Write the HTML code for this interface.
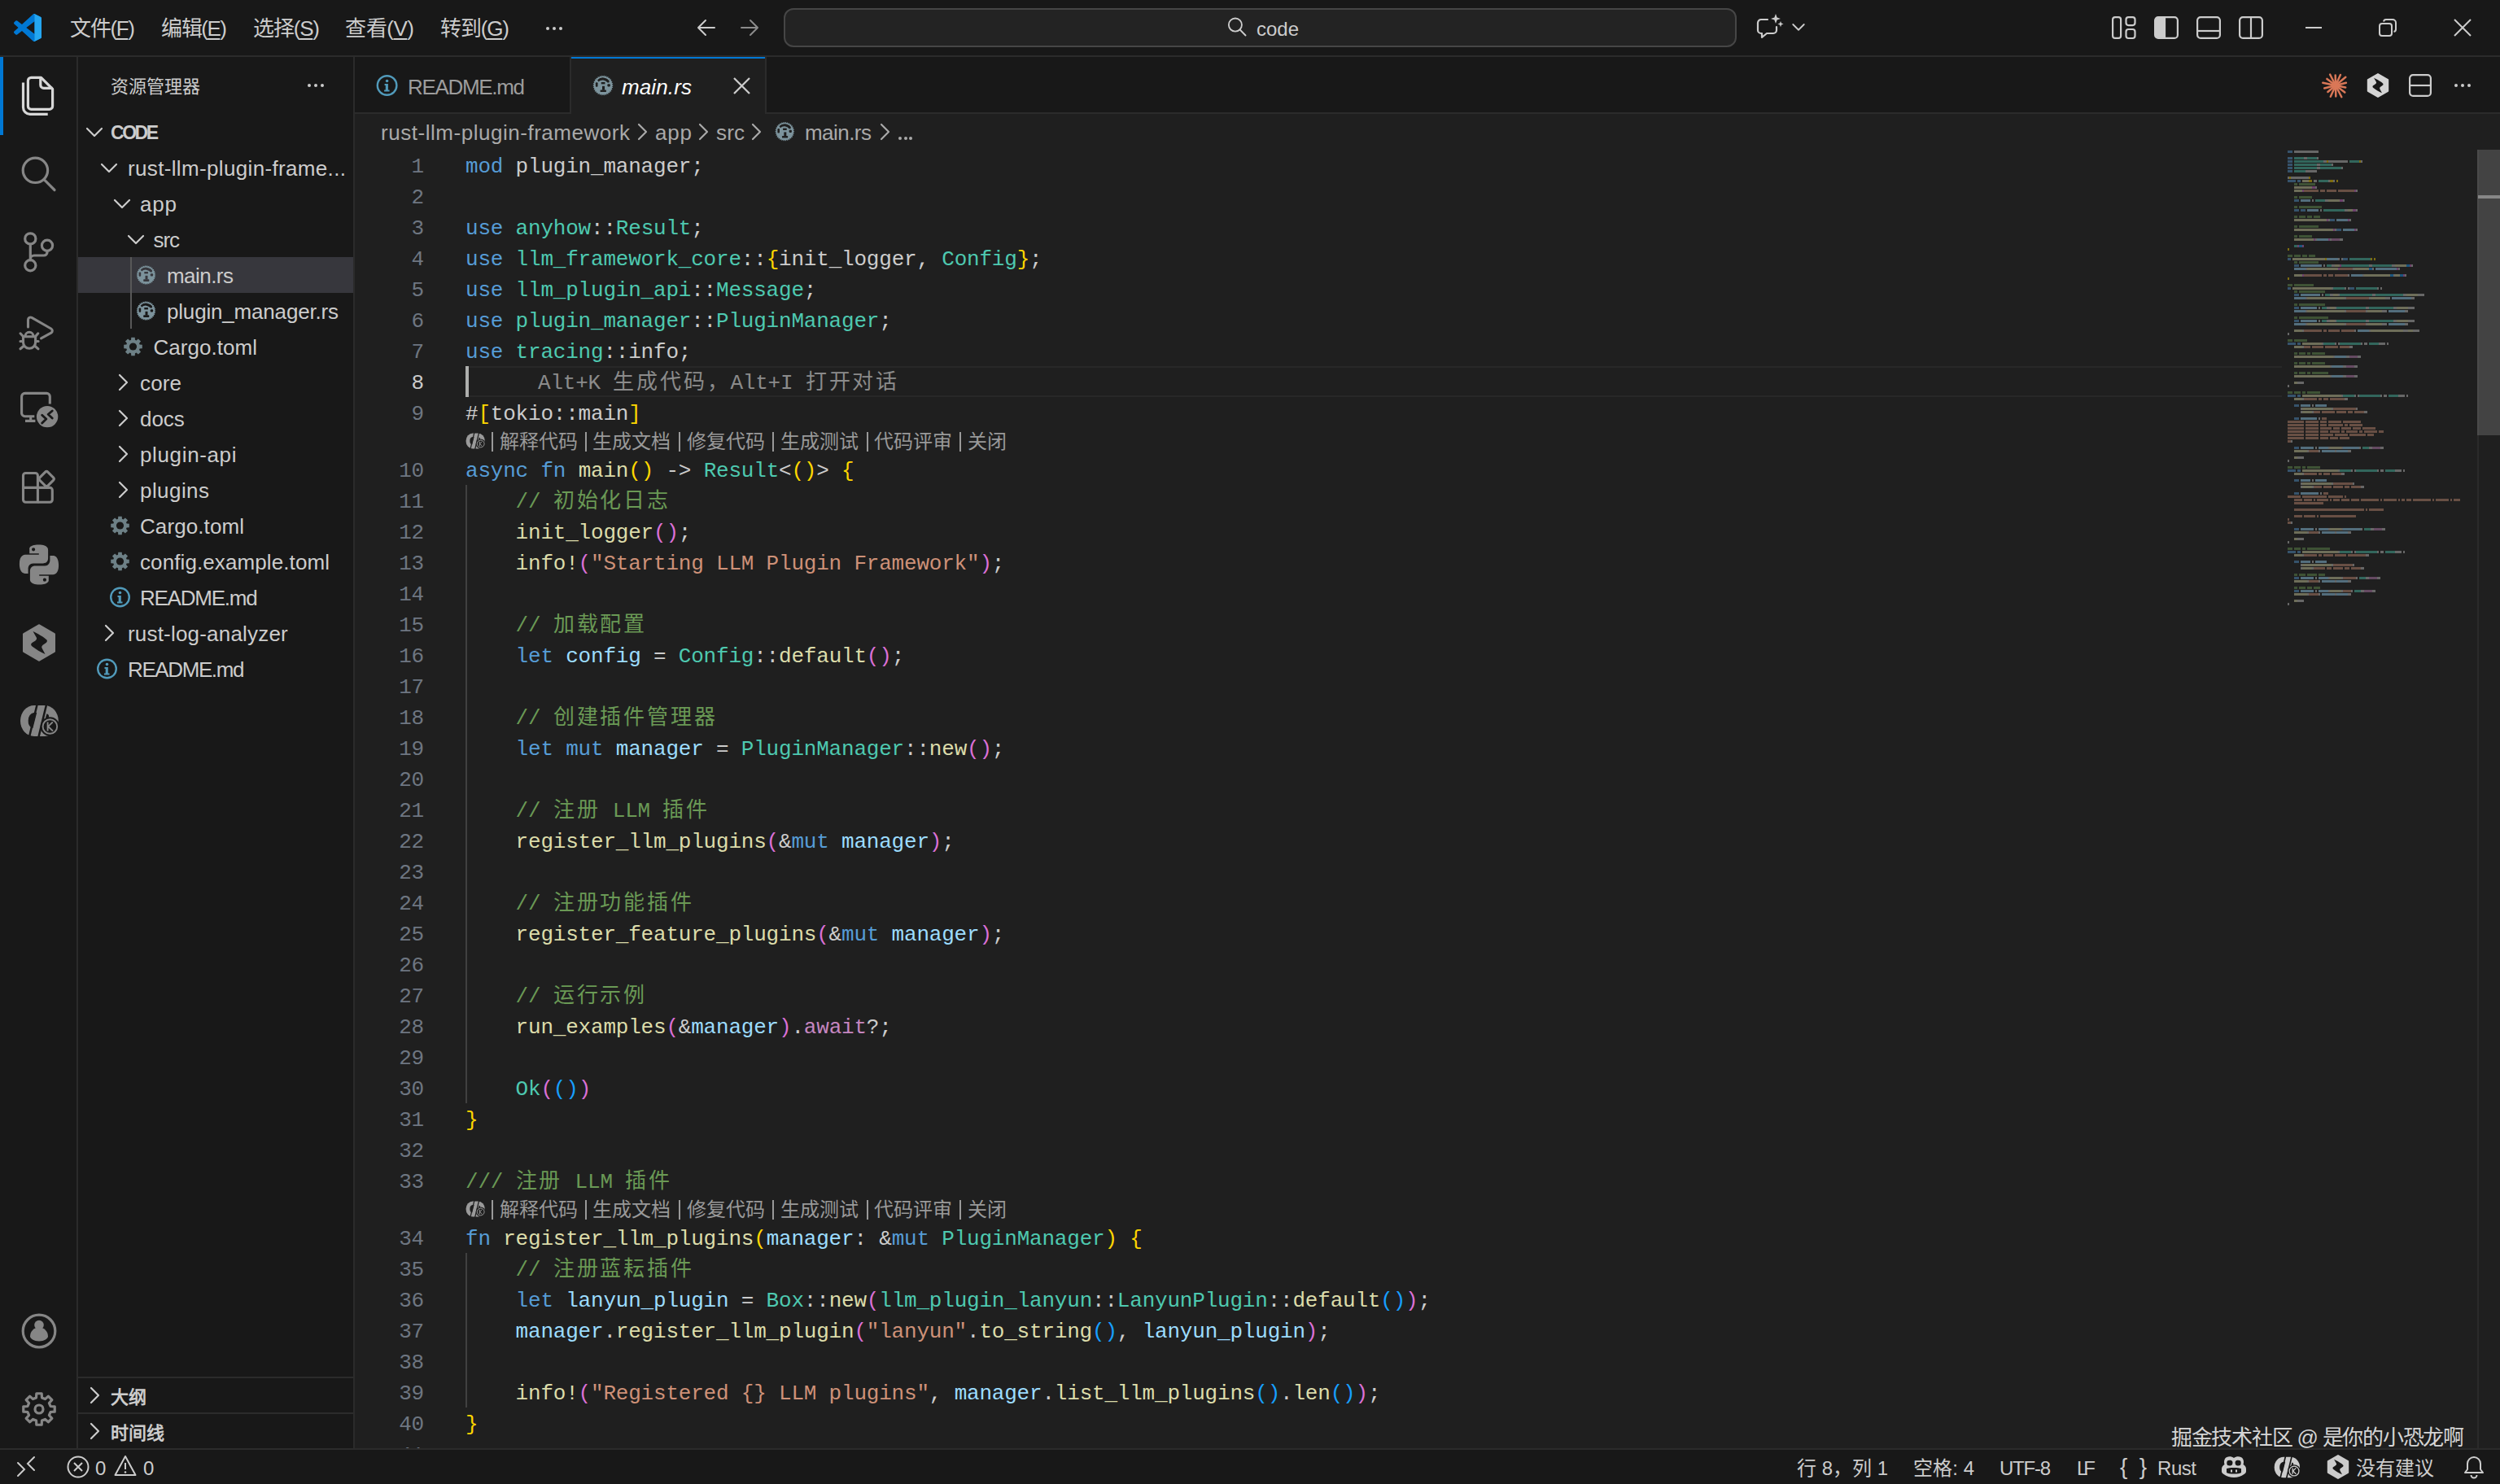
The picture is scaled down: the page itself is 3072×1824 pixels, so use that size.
<!DOCTYPE html><html lang="zh-CN"><head><meta charset="utf-8"><style>
html,body{margin:0;padding:0;width:3072px;height:1824px;overflow:hidden;background:#1f1f1f;}
.tx{position:absolute;white-space:pre;}
svg{overflow:visible}
</style></head><body>
<div style="position:absolute;left:0px;top:0px;width:3072px;height:68px;background:#181818;"></div>
<div style="position:absolute;left:0px;top:68px;width:3072px;height:2px;background:#2b2b2b;"></div>
<div style="position:absolute;left:0px;top:70px;width:94px;height:1710px;background:#181818;"></div>
<div style="position:absolute;left:94px;top:70px;width:2px;height:1710px;background:#2b2b2b;"></div>
<div style="position:absolute;left:96px;top:70px;width:338px;height:1710px;background:#181818;"></div>
<div style="position:absolute;left:434px;top:70px;width:2px;height:1710px;background:#2b2b2b;"></div>
<div style="position:absolute;left:436px;top:70px;width:2636px;height:68px;background:#181818;"></div>
<div style="position:absolute;left:436px;top:138px;width:2636px;height:2px;background:#2b2b2b;"></div>
<div style="position:absolute;left:436px;top:140px;width:2636px;height:1640px;background:#1f1f1f;"></div>
<svg style="position:absolute;left:17px;top:17px" width="34" height="34" viewBox="0 0 100 100" ><defs><linearGradient id="vsg" x1="0" y1="0" x2="1" y2="0"><stop offset="0" stop-color="#0065a9"/><stop offset="0.7" stop-color="#007acc"/><stop offset="1" stop-color="#1f9cf0"/></linearGradient></defs>
<path fill="#0078d4" d="M96.46 10.8 75.86.87a6.23 6.23 0 0 0-7.1 1.21L29.35 38.04 12.19 25.01a4.16 4.16 0 0 0-5.32.24L1.36 30.26a4.17 4.17 0 0 0 0 6.16L16.25 50 1.36 63.58a4.17 4.17 0 0 0 0 6.16l5.51 5.01a4.16 4.16 0 0 0 5.32.24l17.16-13.03 39.41 35.96a6.22 6.22 0 0 0 7.1 1.21l20.6-9.93A6.25 6.25 0 0 0 100 83.58V16.42a6.25 6.25 0 0 0-3.54-5.62zM75.01 72.7 45.1 50l29.91-22.7z"/>
<path fill="#24a6f0" d="M75.86.87 96.46 10.8A6.25 6.25 0 0 1 100 16.42v67.16a6.25 6.25 0 0 1-3.54 5.62l-20.6 9.93a6.22 6.22 0 0 1-7.1-1.21A3.65 3.65 0 0 0 75 95.35V4.65A3.65 3.65 0 0 0 68.76 2.08 6.23 6.23 0 0 1 75.86.87z"/></svg>
<div id="t1" class="tx" style="left:86px;top:21.99px;font-size:26px;line-height:26px;color:#cccccc;font-weight:normal;font-style:normal;font-family:'Liberation Sans', sans-serif;letter-spacing:-1.309px;">文件(<span style="text-decoration:underline;text-decoration-thickness:2px;text-underline-offset:3px">F</span>)</div>
<div id="t2" class="tx" style="left:198px;top:21.99px;font-size:26px;line-height:26px;color:#cccccc;font-weight:normal;font-style:normal;font-family:'Liberation Sans', sans-serif;letter-spacing:-1.422px;">编辑(<span style="text-decoration:underline;text-decoration-thickness:2px;text-underline-offset:3px">E</span>)</div>
<div id="t3" class="tx" style="left:311px;top:21.99px;font-size:26px;line-height:26px;color:#cccccc;font-weight:normal;font-style:normal;font-family:'Liberation Sans', sans-serif;letter-spacing:-1.172px;">选择(<span style="text-decoration:underline;text-decoration-thickness:2px;text-underline-offset:3px">S</span>)</div>
<div id="t4" class="tx" style="left:424px;top:21.99px;font-size:26px;line-height:26px;color:#cccccc;font-weight:normal;font-style:normal;font-family:'Liberation Sans', sans-serif;letter-spacing:-0.422px;">查看(<span style="text-decoration:underline;text-decoration-thickness:2px;text-underline-offset:3px">V</span>)</div>
<div id="t5" class="tx" style="left:541px;top:21.99px;font-size:26px;line-height:26px;color:#cccccc;font-weight:normal;font-style:normal;font-family:'Liberation Sans', sans-serif;letter-spacing:-1.145px;">转到(<span style="text-decoration:underline;text-decoration-thickness:2px;text-underline-offset:3px">G</span>)</div>
<div style="position:absolute;left:671px;top:33px;width:4px;height:4px;background:#cccccc;border-radius:2px"></div>
<div style="position:absolute;left:679px;top:33px;width:4px;height:4px;background:#cccccc;border-radius:2px"></div>
<div style="position:absolute;left:687px;top:33px;width:4px;height:4px;background:#cccccc;border-radius:2px"></div>
<svg style="position:absolute;left:852px;top:18px" width="32" height="32" viewBox="0 0 16 16" ><g fill="none" stroke="#cccccc" stroke-width="1.0" stroke-linecap="round" stroke-linejoin="round"><path d="M13 8H3M7.5 3.5 3 8l4.5 4.5"/></g></svg>
<svg style="position:absolute;left:905px;top:18px" width="32" height="32" viewBox="0 0 16 16" ><g fill="none" stroke="#8b8b8b" stroke-width="1.0" stroke-linecap="round" stroke-linejoin="round"><path d="M3 8h10M8.5 3.5 13 8l-4.5 4.5"/></g></svg>
<div style="position:absolute;left:963px;top:10px;width:1167px;height:44px;border:2px solid #464646;border-radius:12px;background:#232323"></div>
<svg style="position:absolute;left:1506px;top:19px" width="28" height="28" viewBox="0 0 16 16" ><g fill="none" stroke="#cccccc" stroke-width="1.05" stroke-linecap="round" stroke-linejoin="round"><circle cx="6.8" cy="6.6" r="4.6"/><path d="M10.1 10 14 14"/></g></svg>
<div id="t6" class="tx" style="left:1544px;top:23.68px;font-size:24px;line-height:24px;color:#cccccc;font-weight:normal;font-style:normal;font-family:'Liberation Sans', sans-serif;letter-spacing:-0.016px;">code</div>
<svg style="position:absolute;left:2158px;top:16px" width="38" height="36" viewBox="0 0 38 36" ><g fill="none" stroke="#cccccc" stroke-width="2.2" stroke-linejoin="round" stroke-linecap="round">
<path d="M14 8H6a4 4 0 0 0-4 4v9a4 4 0 0 0 4 4h1v5l6-5h8a4 4 0 0 0 4-4v-4"/></g>
<path fill="#cccccc" d="M24 1l1.6 4.4L30 7l-4.4 1.6L24 13l-1.6-4.4L18 7l4.4-1.6z"/>
<path fill="#cccccc" d="M30 10l1 2.6 2.6 1-2.6 1-1 2.6-1-2.6-2.6-1 2.6-1z"/></svg>
<svg style="position:absolute;left:2198px;top:21px" width="24" height="24" viewBox="0 0 16 16" ><g fill="none" stroke="#cccccc" stroke-width="1.2" stroke-linecap="round" stroke-linejoin="round"><path d="M3.5 6 8 10.5 12.5 6"/></g></svg>
<svg style="position:absolute;left:2595px;top:20px" width="30" height="28" viewBox="0 0 30 28" ><g fill="none" stroke="#cccccc" stroke-width="2.2"><rect x="1.1" y="1.1" width="10" height="25.8" rx="3"/><rect x="17.5" y="1.1" width="11" height="10" rx="3"/><rect x="17.5" y="16" width="11" height="11" rx="3"/></g></svg>
<svg style="position:absolute;left:2647px;top:20px" width="30" height="28" viewBox="0 0 30 28" ><rect x="1.1" y="1.1" width="27.8" height="25.8" rx="4" fill="none" stroke="#cccccc" stroke-width="2.2"/><path d="M5 1.1h8v25.8H5a3.9 3.9 0 0 1-3.9-3.9V5A3.9 3.9 0 0 1 5 1.1z" fill="#cccccc"/><path d="M13 1v26" stroke="#cccccc" stroke-width="2.2"/></svg>
<svg style="position:absolute;left:2699px;top:20px" width="30" height="28" viewBox="0 0 30 28" ><g fill="none" stroke="#cccccc" stroke-width="2.2"><rect x="1.1" y="1.1" width="27.8" height="25.8" rx="4"/><path d="M1 18h28"/></g></svg>
<svg style="position:absolute;left:2751px;top:20px" width="30" height="28" viewBox="0 0 30 28" ><g fill="none" stroke="#cccccc" stroke-width="2.2"><rect x="1.1" y="1.1" width="27.8" height="25.8" rx="4"/><path d="M15 1v26"/></g></svg>
<div style="position:absolute;left:2833px;top:33px;width:20px;height:2px;background:#cccccc;"></div>
<svg style="position:absolute;left:2923px;top:23px" width="22" height="22" viewBox="0 0 22 22" ><g fill="none" stroke="#cccccc" stroke-width="2"><rect x="1" y="6" width="15" height="15" rx="3"/><path d="M6 3.5A3 3 0 0 1 9 1h8a4 4 0 0 1 4 4v8a3 3 0 0 1-2.5 3"/></g></svg>
<svg style="position:absolute;left:3015px;top:23px" width="22" height="22" viewBox="0 0 22 22" ><g stroke="#cccccc" stroke-width="2"><path d="M1 1l20 20M21 1L1 21"/></g></svg>
<div style="position:absolute;left:0px;top:70px;width:4px;height:96px;background:#0078d4;"></div>
<svg style="position:absolute;left:0px;top:70px" width="96" height="96" viewBox="0 0 96 96" ><g fill="none" stroke="#d7d7d7" stroke-width="3.2" stroke-linejoin="round">
<path d="M38.4 25.3H50.5L64.6 39.4V60.4a4 4 0 0 1-4 4H38.4a4 4 0 0 1-4-4V29.3a4 4 0 0 1 4-4z"/>
<path d="M49.8 25.5V34.4a4 4 0 0 0 4 4H64.5"/>
<path d="M28.5 31.5V62a8.3 8.3 0 0 0 8.3 8.3H58.7"/></g></svg>
<svg style="position:absolute;left:0px;top:166px" width="96" height="96" viewBox="0 0 96 96" ><g fill="none" stroke="#868686" stroke-width="3.2" stroke-linecap="round"><circle cx="43.4" cy="43.3" r="15.2"/><path d="M54.6 55.2 67 67.5"/></g></svg>
<svg style="position:absolute;left:0px;top:262px" width="96" height="96" viewBox="0 0 96 96" ><g fill="none" stroke="#868686" stroke-width="3.2" stroke-linecap="round"><circle cx="37.3" cy="31.4" r="6.6"/><circle cx="37.3" cy="64.3" r="6.6"/><circle cx="58" cy="39.8" r="6.6"/><path d="M37.3 38v19.7M58 46.4v1.6a4 4 0 0 1-4 4H42a4.7 4.7 0 0 0-4.7 4.7"/></g></svg>
<svg style="position:absolute;left:0px;top:358px" width="96" height="96" viewBox="0 0 96 96" ><g fill="none" stroke="#868686" stroke-width="3.1" stroke-linecap="round" stroke-linejoin="round">
<path d="M34.5 44V35a3 3 0 0 1 4.5-2.6l23.8 13.6a3 3 0 0 1 0 5.2L50.5 57.8"/>
<path d="M28.5 55.7h15.1v7a7.55 7.55 0 0 1-15.1 0z"/><path d="M31 55.3a5 5 0 0 1 10 0"/>
<path d="M25 51.8l3.5 3.7M46.8 51.8l-3.2 3.7M25 61.5h3.5M43.6 61.5h3.5M25 70.8l4.5-3.8M47 70.8l-4.4-3.8"/></g></svg>
<svg style="position:absolute;left:0px;top:454px" width="96" height="96" viewBox="0 0 96 96" ><g fill="none" stroke="#868686" stroke-width="3.1" stroke-linecap="butt" stroke-linejoin="round">
<path d="M42.3 57.7H30.6a4 4 0 0 1-4-4V33.4a4 4 0 0 1 4-4h26.7a4 4 0 0 1 4 4v9.2"/><path d="M37.7 58v5M31 63.4h12.4"/></g>
<circle cx="58.1" cy="58.1" r="13.2" fill="#868686"/>
<g fill="none" stroke="#181818" stroke-width="2.8" stroke-linecap="round" stroke-linejoin="round"><path d="M51.7 56.2 56.8 61.1 51.7 66M64.2 51 59.2 55.3 64.2 60"/></g></svg>
<svg style="position:absolute;left:0px;top:550px" width="96" height="96" viewBox="0 0 96 96" ><g fill="none" stroke="#868686" stroke-width="3.1" stroke-linejoin="round">
<path d="M31.5 31.5h11.9a3 3 0 0 1 3 3v32.8H31.5a3 3 0 0 1-3-3V34.5a3 3 0 0 1 3-3z"/><path d="M28.5 49.4h32.8a3 3 0 0 1 3 3v11.9a3 3 0 0 1-3 3H46.4"/>
<rect x="50.1" y="31.5" width="14.2" height="14.2" rx="2.5" transform="rotate(45 57.2 38.6)"/></g></svg>
<svg style="position:absolute;left:0px;top:646px" width="96" height="96" viewBox="0 0 96 96" ><path fill="#868686" d="M47.5 23.5c-12 0-11.3 5.2-11.3 5.2v5.5h11.6v1.6H31.6s-7.7-.9-7.7 11.3 6.7 11.8 6.7 11.8h4v-5.7s-.2-6.7 6.6-6.7h11.5s6.4.1 6.4-6.2V30s1-6.5-11.6-6.5zm-6.4 3.7a2.1 2.1 0 1 1 0 4.2 2.1 2.1 0 0 1 0-4.2z"/>
<path fill="#868686" d="M48.5 72.5c12 0 11.3-5.2 11.3-5.2v-5.5H48.2v-1.6h16.2s7.7.9 7.7-11.3-6.7-11.8-6.7-11.8h-4v5.7s.2 6.7-6.6 6.7H43.3s-6.4-.1-6.4 6.2V66s-1 6.5 11.6 6.5zm6.4-3.7a2.1 2.1 0 1 1 0-4.2 2.1 2.1 0 0 1 0 4.2z"/></svg>
<svg style="position:absolute;left:0px;top:0px" width="1" height="1" viewBox="0 0 1 1" ><g transform="translate(48,790) scale(1.0) translate(-48,-48)"><path fill="#868686" stroke="#868686" stroke-width="3" stroke-linejoin="round" d="M48 26.8 66.5 37.6v20.8L48 69.2 29.5 58.4V37.6z"/>
<path fill="#181818" d="M40.5 34C46 36.5 54 41 57.5 44.5 58.5 46 57.5 47.5 56 48.5 53 50.5 50.5 52 51.5 54.5L55.5 62C50 59.5 44 56 39.5 52.5 37.5 51 37.8 49 39.5 48 43 46 45.5 44.5 45 42z"/></g></svg>
<svg style="position:absolute;left:24.0px;top:866.0px" width="48.0" height="40.0" viewBox="0 0 48 40" ><rect x="1" y="1" width="46.8" height="38" rx="17" ry="19" fill="#868686"/>
<path fill="#181818" d="M20.5 -1h2.6L13 41h-2.6zM32 -1h2.6L24.5 41h-2.6z"/>
<path fill="#181818" d="M21.2 10L17.5 10A7.5 9.5 0 0 0 10.7 19.5 7.5 9.5 0 0 0 15.5 29L16.4 29z"/>
<path fill="#181818" d="M33.5 11.2a3.8 3.8 0 0 1 2.3 4.8l-2 0.3-1.8-0.3z"/>
<circle cx="37.4" cy="27" r="11.8" fill="#181818"/>
<circle cx="37.4" cy="27" r="8.8" fill="none" stroke="#868686" stroke-width="1.9"/>
<path fill="none" stroke="#868686" stroke-width="1.9" d="M34.6 21.5v11M40.8 21.5l-5.6 5.4 5.8 5.6"/></svg>
<svg style="position:absolute;left:0px;top:1588px" width="96" height="96" viewBox="0 0 96 96" ><circle cx="48" cy="48" r="19.8" fill="none" stroke="#868686" stroke-width="3.2"/>
<circle cx="48" cy="40.5" r="5.8" fill="#868686"/><path fill="#868686" d="M37 54.5a11 11 0 0 1 22 0c0 2.5-4.5 6-11 6s-11-3.5-11-6z"/></svg>
<svg style="position:absolute;left:0px;top:1684px" width="96" height="96" viewBox="0 0 96 96" ><path fill="none" stroke="#868686" stroke-width="3.2" stroke-linejoin="round" d="M67.24 44.80 L67.24 51.20 L62.07 51.50 L60.42 55.48 L63.87 59.34 L59.34 63.87 L55.48 60.42 L51.50 62.07 L51.20 67.24 L44.80 67.24 L44.50 62.07 L40.52 60.42 L36.66 63.87 L32.13 59.34 L35.58 55.48 L33.93 51.50 L28.76 51.20 L28.76 44.80 L33.93 44.50 L35.58 40.52 L32.13 36.66 L36.66 32.13 L40.52 35.58 L44.50 33.93 L44.80 28.76 L51.20 28.76 L51.50 33.93 L55.48 35.58 L59.34 32.13 L63.87 36.66 L60.42 40.52 L62.07 44.50z"/><circle cx="48" cy="48" r="5" fill="none" stroke="#868686" stroke-width="3.2"/></svg>
<div id="t7" class="tx" style="left:136px;top:96.38px;font-size:22px;line-height:22px;color:#cccccc;font-weight:normal;font-style:normal;font-family:'Liberation Sans', sans-serif;">资源管理器</div>
<div style="position:absolute;left:378px;top:103px;width:4px;height:4px;background:#cccccc;border-radius:2px"></div>
<div style="position:absolute;left:386px;top:103px;width:4px;height:4px;background:#cccccc;border-radius:2px"></div>
<div style="position:absolute;left:394px;top:103px;width:4px;height:4px;background:#cccccc;border-radius:2px"></div>
<div style="position:absolute;left:96px;top:316px;width:338px;height:44px;background:#37373d;"></div>
<div style="position:absolute;left:160px;top:316px;width:2px;height:88px;background:#585858;"></div>
<svg style="position:absolute;left:100px;top:146px" width="32" height="32" viewBox="0 0 16 16" ><g fill="none" stroke="#cccccc" stroke-width="1.1" stroke-linecap="round" stroke-linejoin="round"><path d="M3.5 6 L8 10.5 L12.5 6"/></g></svg>
<div id="t8" class="tx" style="left:136px;top:152.03px;font-size:23px;line-height:23px;color:#cccccc;font-weight:bold;font-style:normal;font-family:'Liberation Sans', sans-serif;letter-spacing:-2.484px;">CODE</div>
<svg style="position:absolute;left:118px;top:190px" width="32" height="32" viewBox="0 0 16 16" ><g fill="none" stroke="#cccccc" stroke-width="1.1" stroke-linecap="round" stroke-linejoin="round"><path d="M3.5 6 L8 10.5 L12.5 6"/></g></svg>
<div id="t9" class="tx" style="left:157px;top:193.59px;font-size:26px;line-height:26px;color:#cccccc;font-weight:normal;font-style:normal;font-family:'Liberation Sans', sans-serif;letter-spacing:0.345px;">rust-llm-plugin-frame...</div>
<svg style="position:absolute;left:134px;top:234px" width="32" height="32" viewBox="0 0 16 16" ><g fill="none" stroke="#cccccc" stroke-width="1.1" stroke-linecap="round" stroke-linejoin="round"><path d="M3.5 6 L8 10.5 L12.5 6"/></g></svg>
<div id="t10" class="tx" style="left:172px;top:237.59px;font-size:26px;line-height:26px;color:#cccccc;font-weight:normal;font-style:normal;font-family:'Liberation Sans', sans-serif;letter-spacing:0.805px;">app</div>
<svg style="position:absolute;left:150.5px;top:278px" width="32" height="32" viewBox="0 0 16 16" ><g fill="none" stroke="#cccccc" stroke-width="1.1" stroke-linecap="round" stroke-linejoin="round"><path d="M3.5 6 L8 10.5 L12.5 6"/></g></svg>
<div id="t11" class="tx" style="left:188.5px;top:281.59px;font-size:26px;line-height:26px;color:#cccccc;font-weight:normal;font-style:normal;font-family:'Liberation Sans', sans-serif;letter-spacing:-1.086px;">src</div>
<svg style="position:absolute;left:0px;top:0px" width="1" height="1" viewBox="0 0 1 1" ><g transform="translate(179.5,338) scale(1.000)"><path fill="#7c939c" d="M12.00 0.00 L10.44 1.10 L11.74 2.49 L9.99 3.24 L10.96 4.88 L9.09 5.25 L9.71 7.05 L7.80 7.03 L8.03 8.92 L6.17 8.49 L6.00 10.39 L4.27 9.59 L3.71 11.41 L2.18 10.27 L1.25 11.93 L0.00 10.50 L-1.25 11.93 L-2.18 10.27 L-3.71 11.41 L-4.27 9.59 L-6.00 10.39 L-6.17 8.49 L-8.03 8.92 L-7.80 7.03 L-9.71 7.05 L-9.09 5.25 L-10.96 4.88 L-9.99 3.24 L-11.74 2.49 L-10.44 1.10 L-12.00 0.00 L-10.44 -1.10 L-11.74 -2.49 L-9.99 -3.24 L-10.96 -4.88 L-9.09 -5.25 L-9.71 -7.05 L-7.80 -7.03 L-8.03 -8.92 L-6.17 -8.49 L-6.00 -10.39 L-4.27 -9.59 L-3.71 -11.41 L-2.18 -10.27 L-1.25 -11.93 L-0.00 -10.50 L1.25 -11.93 L2.18 -10.27 L3.71 -11.41 L4.27 -9.59 L6.00 -10.39 L6.17 -8.49 L8.03 -8.92 L7.80 -7.03 L9.71 -7.05 L9.09 -5.25 L10.96 -4.88 L9.99 -3.24 L11.74 -2.49 L10.44 -1.10z"/>
<g fill="#37373d"><path d="M-6.8 -6.6 A9.4 9.4 0 0 1 7.6 -5.4 L7.2 -3.4 L5.4 -3.4 A7.2 7.2 0 0 0 -5.4 -4.4 z"/>
<rect x="-2.2" y="-4" width="4.6" height="2.4"/><path d="M-1 0.8 h3 v4.8 h-3z"/><rect x="-3.3" y="5.3" width="7.1" height="2.6" rx="0.6"/>
<rect x="-8.9" y="-3.6" width="2.6" height="5.4" rx="1"/><rect x="5.3" y="-1.8" width="3.3" height="3.2" rx="1"/></g></g></svg>
<div id="t12" class="tx" style="left:205px;top:325.59px;font-size:26px;line-height:26px;color:#cccccc;font-weight:normal;font-style:normal;font-family:'Liberation Sans', sans-serif;letter-spacing:-0.542px;">main.rs</div>
<svg style="position:absolute;left:0px;top:0px" width="1" height="1" viewBox="0 0 1 1" ><g transform="translate(179.5,382) scale(1.000)"><path fill="#7c939c" d="M12.00 0.00 L10.44 1.10 L11.74 2.49 L9.99 3.24 L10.96 4.88 L9.09 5.25 L9.71 7.05 L7.80 7.03 L8.03 8.92 L6.17 8.49 L6.00 10.39 L4.27 9.59 L3.71 11.41 L2.18 10.27 L1.25 11.93 L0.00 10.50 L-1.25 11.93 L-2.18 10.27 L-3.71 11.41 L-4.27 9.59 L-6.00 10.39 L-6.17 8.49 L-8.03 8.92 L-7.80 7.03 L-9.71 7.05 L-9.09 5.25 L-10.96 4.88 L-9.99 3.24 L-11.74 2.49 L-10.44 1.10 L-12.00 0.00 L-10.44 -1.10 L-11.74 -2.49 L-9.99 -3.24 L-10.96 -4.88 L-9.09 -5.25 L-9.71 -7.05 L-7.80 -7.03 L-8.03 -8.92 L-6.17 -8.49 L-6.00 -10.39 L-4.27 -9.59 L-3.71 -11.41 L-2.18 -10.27 L-1.25 -11.93 L-0.00 -10.50 L1.25 -11.93 L2.18 -10.27 L3.71 -11.41 L4.27 -9.59 L6.00 -10.39 L6.17 -8.49 L8.03 -8.92 L7.80 -7.03 L9.71 -7.05 L9.09 -5.25 L10.96 -4.88 L9.99 -3.24 L11.74 -2.49 L10.44 -1.10z"/>
<g fill="#181818"><path d="M-6.8 -6.6 A9.4 9.4 0 0 1 7.6 -5.4 L7.2 -3.4 L5.4 -3.4 A7.2 7.2 0 0 0 -5.4 -4.4 z"/>
<rect x="-2.2" y="-4" width="4.6" height="2.4"/><path d="M-1 0.8 h3 v4.8 h-3z"/><rect x="-3.3" y="5.3" width="7.1" height="2.6" rx="0.6"/>
<rect x="-8.9" y="-3.6" width="2.6" height="5.4" rx="1"/><rect x="5.3" y="-1.8" width="3.3" height="3.2" rx="1"/></g></g></svg>
<div id="t13" class="tx" style="left:205px;top:369.59px;font-size:26px;line-height:26px;color:#cccccc;font-weight:normal;font-style:normal;font-family:'Liberation Sans', sans-serif;letter-spacing:-0.183px;">plugin_manager.rs</div>
<svg style="position:absolute;left:0px;top:0px" width="1" height="1" viewBox="0 0 1 1" ><path fill="#6d8086" d="M174.78 423.76 L174.78 428.24 L171.64 428.47 L171.01 430.01 L173.06 432.39 L169.89 435.56 L167.51 433.51 L165.97 434.14 L165.74 437.28 L161.26 437.28 L161.03 434.14 L159.49 433.51 L157.11 435.56 L153.94 432.39 L155.99 430.01 L155.36 428.47 L152.22 428.24 L152.22 423.76 L155.36 423.53 L155.99 421.99 L153.94 419.61 L157.11 416.44 L159.49 418.49 L161.03 417.86 L161.26 414.72 L165.74 414.72 L165.97 417.86 L167.51 418.49 L169.89 416.44 L173.06 419.61 L171.01 421.99 L171.64 423.53z"/><circle cx="163.5" cy="426" r="4.60" fill="#181818"/></svg>
<div id="t14" class="tx" style="left:188.5px;top:413.59px;font-size:26px;line-height:26px;color:#cccccc;font-weight:normal;font-style:normal;font-family:'Liberation Sans', sans-serif;letter-spacing:0.038px;">Cargo.toml</div>
<svg style="position:absolute;left:134.5px;top:454px" width="32" height="32" viewBox="0 0 16 16" ><g fill="none" stroke="#cccccc" stroke-width="1.1" stroke-linecap="round" stroke-linejoin="round"><path d="M6 3.5 L10.5 8 L6 12.5"/></g></svg>
<div id="t15" class="tx" style="left:172px;top:457.59px;font-size:26px;line-height:26px;color:#cccccc;font-weight:normal;font-style:normal;font-family:'Liberation Sans', sans-serif;letter-spacing:0.141px;">core</div>
<svg style="position:absolute;left:134.5px;top:498px" width="32" height="32" viewBox="0 0 16 16" ><g fill="none" stroke="#cccccc" stroke-width="1.1" stroke-linecap="round" stroke-linejoin="round"><path d="M6 3.5 L10.5 8 L6 12.5"/></g></svg>
<div id="t16" class="tx" style="left:172px;top:501.59px;font-size:26px;line-height:26px;color:#cccccc;font-weight:normal;font-style:normal;font-family:'Liberation Sans', sans-serif;letter-spacing:-0.041px;">docs</div>
<svg style="position:absolute;left:134.5px;top:542px" width="32" height="32" viewBox="0 0 16 16" ><g fill="none" stroke="#cccccc" stroke-width="1.1" stroke-linecap="round" stroke-linejoin="round"><path d="M6 3.5 L10.5 8 L6 12.5"/></g></svg>
<div id="t17" class="tx" style="left:172px;top:545.59px;font-size:26px;line-height:26px;color:#cccccc;font-weight:normal;font-style:normal;font-family:'Liberation Sans', sans-serif;letter-spacing:0.639px;">plugin-api</div>
<svg style="position:absolute;left:134.5px;top:586px" width="32" height="32" viewBox="0 0 16 16" ><g fill="none" stroke="#cccccc" stroke-width="1.1" stroke-linecap="round" stroke-linejoin="round"><path d="M6 3.5 L10.5 8 L6 12.5"/></g></svg>
<div id="t18" class="tx" style="left:172px;top:589.59px;font-size:26px;line-height:26px;color:#cccccc;font-weight:normal;font-style:normal;font-family:'Liberation Sans', sans-serif;letter-spacing:0.432px;">plugins</div>
<svg style="position:absolute;left:0px;top:0px" width="1" height="1" viewBox="0 0 1 1" ><path fill="#6d8086" d="M158.78 643.76 L158.78 648.24 L155.64 648.47 L155.01 650.01 L157.06 652.39 L153.89 655.56 L151.51 653.51 L149.97 654.14 L149.74 657.28 L145.26 657.28 L145.03 654.14 L143.49 653.51 L141.11 655.56 L137.94 652.39 L139.99 650.01 L139.36 648.47 L136.22 648.24 L136.22 643.76 L139.36 643.53 L139.99 641.99 L137.94 639.61 L141.11 636.44 L143.49 638.49 L145.03 637.86 L145.26 634.72 L149.74 634.72 L149.97 637.86 L151.51 638.49 L153.89 636.44 L157.06 639.61 L155.01 641.99 L155.64 643.53z"/><circle cx="147.5" cy="646" r="4.60" fill="#181818"/></svg>
<div id="t19" class="tx" style="left:172px;top:633.59px;font-size:26px;line-height:26px;color:#cccccc;font-weight:normal;font-style:normal;font-family:'Liberation Sans', sans-serif;letter-spacing:0.094px;">Cargo.toml</div>
<svg style="position:absolute;left:0px;top:0px" width="1" height="1" viewBox="0 0 1 1" ><path fill="#6d8086" d="M158.78 687.76 L158.78 692.24 L155.64 692.47 L155.01 694.01 L157.06 696.39 L153.89 699.56 L151.51 697.51 L149.97 698.14 L149.74 701.28 L145.26 701.28 L145.03 698.14 L143.49 697.51 L141.11 699.56 L137.94 696.39 L139.99 694.01 L139.36 692.47 L136.22 692.24 L136.22 687.76 L139.36 687.53 L139.99 685.99 L137.94 683.61 L141.11 680.44 L143.49 682.49 L145.03 681.86 L145.26 678.72 L149.74 678.72 L149.97 681.86 L151.51 682.49 L153.89 680.44 L157.06 683.61 L155.01 685.99 L155.64 687.53z"/><circle cx="147.5" cy="690" r="4.60" fill="#181818"/></svg>
<div id="t20" class="tx" style="left:172px;top:677.59px;font-size:26px;line-height:26px;color:#cccccc;font-weight:normal;font-style:normal;font-family:'Liberation Sans', sans-serif;letter-spacing:0.098px;">config.example.toml</div>
<svg style="position:absolute;left:0px;top:0px" width="1" height="1" viewBox="0 0 1 1" ><circle cx="147.5" cy="734" r="11.3" fill="none" stroke="#519aba" stroke-width="2.4"/>
<circle cx="147.5" cy="728.5" r="1.8" fill="#519aba"/><path fill="#519aba" d="M144.5 732h4.3v7.5h1.7v2h-6.5v-2h1.7v-5.5h-1.2z"/></svg>
<div id="t21" class="tx" style="left:172px;top:721.59px;font-size:26px;line-height:26px;color:#cccccc;font-weight:normal;font-style:normal;font-family:'Liberation Sans', sans-serif;letter-spacing:-1.247px;">README.md</div>
<svg style="position:absolute;left:118px;top:762px" width="32" height="32" viewBox="0 0 16 16" ><g fill="none" stroke="#cccccc" stroke-width="1.1" stroke-linecap="round" stroke-linejoin="round"><path d="M6 3.5 L10.5 8 L6 12.5"/></g></svg>
<div id="t22" class="tx" style="left:157px;top:765.59px;font-size:26px;line-height:26px;color:#cccccc;font-weight:normal;font-style:normal;font-family:'Liberation Sans', sans-serif;letter-spacing:0.191px;">rust-log-analyzer</div>
<svg style="position:absolute;left:0px;top:0px" width="1" height="1" viewBox="0 0 1 1" ><circle cx="131.5" cy="822" r="11.3" fill="none" stroke="#519aba" stroke-width="2.4"/>
<circle cx="131.5" cy="816.5" r="1.8" fill="#519aba"/><path fill="#519aba" d="M128.5 820h4.3v7.5h1.7v2h-6.5v-2h1.7v-5.5h-1.2z"/></svg>
<div id="t23" class="tx" style="left:157px;top:809.59px;font-size:26px;line-height:26px;color:#cccccc;font-weight:normal;font-style:normal;font-family:'Liberation Sans', sans-serif;letter-spacing:-1.397px;">README.md</div>
<div style="position:absolute;left:96px;top:1692px;width:338px;height:2px;background:#2b2b2b;"></div>
<div style="position:absolute;left:96px;top:1736px;width:338px;height:2px;background:#2b2b2b;"></div>
<svg style="position:absolute;left:100px;top:1699px" width="32" height="32" viewBox="0 0 16 16" ><g fill="none" stroke="#cccccc" stroke-width="1.1" stroke-linecap="round" stroke-linejoin="round"><path d="M6 3.5 L10.5 8 L6 12.5"/></g></svg>
<div id="t24" class="tx" style="left:136px;top:1706.88px;font-size:22px;line-height:22px;color:#cccccc;font-weight:bold;font-style:normal;font-family:'Liberation Sans', sans-serif;">大纲</div>
<svg style="position:absolute;left:100px;top:1743px" width="32" height="32" viewBox="0 0 16 16" ><g fill="none" stroke="#cccccc" stroke-width="1.1" stroke-linecap="round" stroke-linejoin="round"><path d="M6 3.5 L10.5 8 L6 12.5"/></g></svg>
<div id="t25" class="tx" style="left:136px;top:1750.88px;font-size:22px;line-height:22px;color:#cccccc;font-weight:bold;font-style:normal;font-family:'Liberation Sans', sans-serif;">时间线</div>
<div style="position:absolute;left:700px;top:70px;width:2px;height:68px;background:#2b2b2b;"></div>
<div style="position:absolute;left:702px;top:70px;width:238px;height:70px;background:#1f1f1f;"></div>
<div style="position:absolute;left:702px;top:70px;width:238px;height:2px;background:#0078d4;"></div>
<div style="position:absolute;left:940px;top:70px;width:2px;height:68px;background:#2b2b2b;"></div>
<svg style="position:absolute;left:0px;top:0px" width="1" height="1" viewBox="0 0 1 1" ><circle cx="475.6" cy="105" r="11.8" fill="none" stroke="#519aba" stroke-width="2.4"/>
<circle cx="475.6" cy="99.5" r="1.8" fill="#519aba"/><path fill="#519aba" d="M472.6 103h4.3v7.5h1.7v2h-6.5v-2h1.7v-5.5h-1.2z"/></svg>
<div id="t26" class="tx" style="left:501px;top:94.29px;font-size:26px;line-height:26px;color:#9d9d9d;font-weight:normal;font-style:normal;font-family:'Liberation Sans', sans-serif;letter-spacing:-1.322px;">README.md</div>
<svg style="position:absolute;left:0px;top:0px" width="1" height="1" viewBox="0 0 1 1" ><g transform="translate(741,105) scale(1.025)"><path fill="#7c939c" d="M12.30 0.00 L10.74 1.13 L12.03 2.56 L10.27 3.34 L11.24 5.00 L9.35 5.40 L9.95 7.23 L8.03 7.23 L8.23 9.14 L6.35 8.74 L6.15 10.65 L4.39 9.87 L3.80 11.70 L2.25 10.56 L1.29 12.23 L0.00 10.80 L-1.29 12.23 L-2.25 10.56 L-3.80 11.70 L-4.39 9.87 L-6.15 10.65 L-6.35 8.74 L-8.23 9.14 L-8.03 7.23 L-9.95 7.23 L-9.35 5.40 L-11.24 5.00 L-10.27 3.34 L-12.03 2.56 L-10.74 1.13 L-12.30 0.00 L-10.74 -1.13 L-12.03 -2.56 L-10.27 -3.34 L-11.24 -5.00 L-9.35 -5.40 L-9.95 -7.23 L-8.03 -7.23 L-8.23 -9.14 L-6.35 -8.74 L-6.15 -10.65 L-4.39 -9.87 L-3.80 -11.70 L-2.25 -10.56 L-1.29 -12.23 L-0.00 -10.80 L1.29 -12.23 L2.25 -10.56 L3.80 -11.70 L4.39 -9.87 L6.15 -10.65 L6.35 -8.74 L8.23 -9.14 L8.03 -7.23 L9.95 -7.23 L9.35 -5.40 L11.24 -5.00 L10.27 -3.34 L12.03 -2.56 L10.74 -1.13z"/>
<g fill="#1f1f1f"><path d="M-6.8 -6.6 A9.4 9.4 0 0 1 7.6 -5.4 L7.2 -3.4 L5.4 -3.4 A7.2 7.2 0 0 0 -5.4 -4.4 z"/>
<rect x="-2.2" y="-4" width="4.6" height="2.4"/><path d="M-1 0.8 h3 v4.8 h-3z"/><rect x="-3.3" y="5.3" width="7.1" height="2.6" rx="0.6"/>
<rect x="-8.9" y="-3.6" width="2.6" height="5.4" rx="1"/><rect x="5.3" y="-1.8" width="3.3" height="3.2" rx="1"/></g></g></svg>
<div id="t27" class="tx" style="left:764px;top:94.29px;font-size:26px;line-height:26px;color:#ffffff;font-weight:normal;font-style:italic;font-family:'Liberation Sans', sans-serif;letter-spacing:0.125px;">main.rs</div>
<svg style="position:absolute;left:901px;top:95px" width="21" height="21" viewBox="0 0 21 21" ><g stroke="#cccccc" stroke-width="2.3"><path d="M1 1l19 19M20 1L1 20"/></g></svg>
<svg style="position:absolute;left:0px;top:0px" width="1" height="1" viewBox="0 0 1 1" ><g stroke="#d97757" stroke-width="2.5" stroke-linecap="round"><path d="M2870.0 105.0L2882.2 107.5"/><path d="M2870.0 105.0L2881.3 113.6"/><path d="M2870.0 105.0L2877.3 119.2"/><path d="M2870.0 105.0L2870.3 118.4"/><path d="M2870.0 105.0L2863.8 118.8"/><path d="M2870.0 105.0L2860.4 113.0"/><path d="M2870.0 105.0L2856.2 108.5"/><path d="M2870.0 105.0L2854.3 101.8"/><path d="M2870.0 105.0L2859.4 96.9"/><path d="M2870.0 105.0L2863.1 91.5"/><path d="M2870.0 105.0L2869.7 92.5"/><path d="M2870.0 105.0L2875.9 92.0"/><path d="M2870.0 105.0L2882.3 94.7"/><path d="M2870.0 105.0L2882.9 101.7"/></g><circle cx="2870" cy="105" r="3" fill="#d97757"/></svg>
<svg style="position:absolute;left:0px;top:0px" width="1" height="1" viewBox="0 0 1 1" ><g transform="translate(2922,105) scale(0.66) translate(-48,-48)"><path fill="#d4d4d4" stroke="#d4d4d4" stroke-width="3" stroke-linejoin="round" d="M48 26.8 66.5 37.6v20.8L48 69.2 29.5 58.4V37.6z"/>
<path fill="#181818" d="M40.5 34C46 36.5 54 41 57.5 44.5 58.5 46 57.5 47.5 56 48.5 53 50.5 50.5 52 51.5 54.5L55.5 62C50 59.5 44 56 39.5 52.5 37.5 51 37.8 49 39.5 48 43 46 45.5 44.5 45 42z"/></g></svg>
<svg style="position:absolute;left:2960px;top:91px" width="28" height="28" viewBox="0 0 28 28" ><g fill="none" stroke="#cccccc" stroke-width="2.2"><rect x="1.1" y="1.1" width="25.8" height="25.8" rx="4"/><path d="M1 14h26"/></g></svg>
<div style="position:absolute;left:3016px;top:103px;width:4px;height:4px;background:#cccccc;border-radius:2px"></div>
<div style="position:absolute;left:3024px;top:103px;width:4px;height:4px;background:#cccccc;border-radius:2px"></div>
<div style="position:absolute;left:3032px;top:103px;width:4px;height:4px;background:#cccccc;border-radius:2px"></div>
<div id="t28" class="tx" style="left:468px;top:149.69px;font-size:26px;line-height:26px;color:#a9a9a9;font-weight:normal;font-style:normal;font-family:'Liberation Sans', sans-serif;letter-spacing:0.530px;">rust-llm-plugin-framework</div>
<svg style="position:absolute;left:773px;top:146px" width="32" height="32" viewBox="0 0 16 16" ><g fill="none" stroke="#a9a9a9" stroke-width="1.1" stroke-linecap="round" stroke-linejoin="round"><path d="M6 3.5 L10.5 8 L6 12.5"/></g></svg>
<div id="t29" class="tx" style="left:805px;top:149.69px;font-size:26px;line-height:26px;color:#a9a9a9;font-weight:normal;font-style:normal;font-family:'Liberation Sans', sans-serif;letter-spacing:0.805px;">app</div>
<svg style="position:absolute;left:848px;top:146px" width="32" height="32" viewBox="0 0 16 16" ><g fill="none" stroke="#a9a9a9" stroke-width="1.1" stroke-linecap="round" stroke-linejoin="round"><path d="M6 3.5 L10.5 8 L6 12.5"/></g></svg>
<div id="t30" class="tx" style="left:880px;top:149.69px;font-size:26px;line-height:26px;color:#a9a9a9;font-weight:normal;font-style:normal;font-family:'Liberation Sans', sans-serif;letter-spacing:0.164px;">src</div>
<svg style="position:absolute;left:913px;top:146px" width="32" height="32" viewBox="0 0 16 16" ><g fill="none" stroke="#a9a9a9" stroke-width="1.1" stroke-linecap="round" stroke-linejoin="round"><path d="M6 3.5 L10.5 8 L6 12.5"/></g></svg>
<svg style="position:absolute;left:0px;top:0px" width="1" height="1" viewBox="0 0 1 1" ><g transform="translate(964.3,161.6) scale(1.000)"><path fill="#7c939c" d="M12.00 0.00 L10.44 1.10 L11.74 2.49 L9.99 3.24 L10.96 4.88 L9.09 5.25 L9.71 7.05 L7.80 7.03 L8.03 8.92 L6.17 8.49 L6.00 10.39 L4.27 9.59 L3.71 11.41 L2.18 10.27 L1.25 11.93 L0.00 10.50 L-1.25 11.93 L-2.18 10.27 L-3.71 11.41 L-4.27 9.59 L-6.00 10.39 L-6.17 8.49 L-8.03 8.92 L-7.80 7.03 L-9.71 7.05 L-9.09 5.25 L-10.96 4.88 L-9.99 3.24 L-11.74 2.49 L-10.44 1.10 L-12.00 0.00 L-10.44 -1.10 L-11.74 -2.49 L-9.99 -3.24 L-10.96 -4.88 L-9.09 -5.25 L-9.71 -7.05 L-7.80 -7.03 L-8.03 -8.92 L-6.17 -8.49 L-6.00 -10.39 L-4.27 -9.59 L-3.71 -11.41 L-2.18 -10.27 L-1.25 -11.93 L-0.00 -10.50 L1.25 -11.93 L2.18 -10.27 L3.71 -11.41 L4.27 -9.59 L6.00 -10.39 L6.17 -8.49 L8.03 -8.92 L7.80 -7.03 L9.71 -7.05 L9.09 -5.25 L10.96 -4.88 L9.99 -3.24 L11.74 -2.49 L10.44 -1.10z"/>
<g fill="#1f1f1f"><path d="M-6.8 -6.6 A9.4 9.4 0 0 1 7.6 -5.4 L7.2 -3.4 L5.4 -3.4 A7.2 7.2 0 0 0 -5.4 -4.4 z"/>
<rect x="-2.2" y="-4" width="4.6" height="2.4"/><path d="M-1 0.8 h3 v4.8 h-3z"/><rect x="-3.3" y="5.3" width="7.1" height="2.6" rx="0.6"/>
<rect x="-8.9" y="-3.6" width="2.6" height="5.4" rx="1"/><rect x="5.3" y="-1.8" width="3.3" height="3.2" rx="1"/></g></g></svg>
<div id="t31" class="tx" style="left:989px;top:149.69px;font-size:26px;line-height:26px;color:#a9a9a9;font-weight:normal;font-style:normal;font-family:'Liberation Sans', sans-serif;letter-spacing:-0.542px;">main.rs</div>
<svg style="position:absolute;left:1071px;top:146px" width="32" height="32" viewBox="0 0 16 16" ><g fill="none" stroke="#a9a9a9" stroke-width="1.1" stroke-linecap="round" stroke-linejoin="round"><path d="M6 3.5 L10.5 8 L6 12.5"/></g></svg>
<div style="position:absolute;left:1104.0px;top:168px;width:4px;height:4px;background:#a9a9a9;border-radius:2px"></div>
<div style="position:absolute;left:1110.5px;top:168px;width:4px;height:4px;background:#a9a9a9;border-radius:2px"></div>
<div style="position:absolute;left:1117.0px;top:168px;width:4px;height:4px;background:#a9a9a9;border-radius:2px"></div>
<div style="position:absolute;left:572px;top:450px;width:2232px;height:2px;background:#282828;"></div>
<div style="position:absolute;left:572px;top:486px;width:2232px;height:2px;background:#282828;"></div>
<div style="position:absolute;left:572px;top:596px;width:2px;height:760px;background:#404040;"></div>
<div style="position:absolute;left:572px;top:1540px;width:2px;height:190px;background:#404040;"></div>
<div class="tx" style="left:505.6px;top:192.1px;font:26px/26px 'Liberation Mono', monospace;letter-spacing:-0.203px;color:#6e7681">1</div>
<div class="tx" style="left:572px;top:192.1px;font:26px/26px 'Liberation Mono', monospace;letter-spacing:-0.203px"><span style="color:#569cd6">mod</span><span style="color:#cccccc"> plugin_manager;</span></div>
<div class="tx" style="left:505.6px;top:230.1px;font:26px/26px 'Liberation Mono', monospace;letter-spacing:-0.203px;color:#6e7681">2</div>
<div class="tx" style="left:505.6px;top:268.1px;font:26px/26px 'Liberation Mono', monospace;letter-spacing:-0.203px;color:#6e7681">3</div>
<div class="tx" style="left:572px;top:268.1px;font:26px/26px 'Liberation Mono', monospace;letter-spacing:-0.203px"><span style="color:#569cd6">use</span><span style="color:#cccccc"> </span><span style="color:#4ec9b0">anyhow</span><span style="color:#cccccc">::</span><span style="color:#4ec9b0">Result</span><span style="color:#cccccc">;</span></div>
<div class="tx" style="left:505.6px;top:306.1px;font:26px/26px 'Liberation Mono', monospace;letter-spacing:-0.203px;color:#6e7681">4</div>
<div class="tx" style="left:572px;top:306.1px;font:26px/26px 'Liberation Mono', monospace;letter-spacing:-0.203px"><span style="color:#569cd6">use</span><span style="color:#cccccc"> </span><span style="color:#4ec9b0">llm_framework_core</span><span style="color:#cccccc">::</span><span style="color:#ffd700">{</span><span style="color:#cccccc">init_logger, </span><span style="color:#4ec9b0">Config</span><span style="color:#ffd700">}</span><span style="color:#cccccc">;</span></div>
<div class="tx" style="left:505.6px;top:344.1px;font:26px/26px 'Liberation Mono', monospace;letter-spacing:-0.203px;color:#6e7681">5</div>
<div class="tx" style="left:572px;top:344.1px;font:26px/26px 'Liberation Mono', monospace;letter-spacing:-0.203px"><span style="color:#569cd6">use</span><span style="color:#cccccc"> </span><span style="color:#4ec9b0">llm_plugin_api</span><span style="color:#cccccc">::</span><span style="color:#4ec9b0">Message</span><span style="color:#cccccc">;</span></div>
<div class="tx" style="left:505.6px;top:382.1px;font:26px/26px 'Liberation Mono', monospace;letter-spacing:-0.203px;color:#6e7681">6</div>
<div class="tx" style="left:572px;top:382.1px;font:26px/26px 'Liberation Mono', monospace;letter-spacing:-0.203px"><span style="color:#569cd6">use</span><span style="color:#cccccc"> </span><span style="color:#4ec9b0">plugin_manager</span><span style="color:#cccccc">::</span><span style="color:#4ec9b0">PluginManager</span><span style="color:#cccccc">;</span></div>
<div class="tx" style="left:505.6px;top:420.1px;font:26px/26px 'Liberation Mono', monospace;letter-spacing:-0.203px;color:#6e7681">7</div>
<div class="tx" style="left:572px;top:420.1px;font:26px/26px 'Liberation Mono', monospace;letter-spacing:-0.203px"><span style="color:#569cd6">use</span><span style="color:#cccccc"> </span><span style="color:#4ec9b0">tracing</span><span style="color:#cccccc">::info;</span></div>
<div class="tx" style="left:505.6px;top:458.1px;font:26px/26px 'Liberation Mono', monospace;letter-spacing:-0.203px;color:#cccccc">8</div>
<div class="tx" style="left:505.6px;top:496.1px;font:26px/26px 'Liberation Mono', monospace;letter-spacing:-0.203px;color:#6e7681">9</div>
<div class="tx" style="left:572px;top:496.1px;font:26px/26px 'Liberation Mono', monospace;letter-spacing:-0.203px"><span style="color:#cccccc">#</span><span style="color:#ffd700">[</span><span style="color:#cccccc">tokio::main</span><span style="color:#ffd700">]</span></div>
<div class="tx" style="left:490.2px;top:566.1px;font:26px/26px 'Liberation Mono', monospace;letter-spacing:-0.203px;color:#6e7681">10</div>
<div class="tx" style="left:572px;top:566.1px;font:26px/26px 'Liberation Mono', monospace;letter-spacing:-0.203px"><span style="color:#569cd6">async</span><span style="color:#cccccc"> </span><span style="color:#569cd6">fn</span><span style="color:#cccccc"> </span><span style="color:#dcdcaa">main</span><span style="color:#ffd700">()</span><span style="color:#cccccc"> -&gt; </span><span style="color:#4ec9b0">Result</span><span style="color:#cccccc">&lt;</span><span style="color:#ffd700">()</span><span style="color:#cccccc">&gt; </span><span style="color:#ffd700">{</span></div>
<div class="tx" style="left:490.2px;top:604.1px;font:26px/26px 'Liberation Mono', monospace;letter-spacing:-0.203px;color:#6e7681">11</div>
<div class="tx" style="left:572px;top:604.1px;font:26px/26px 'Liberation Mono', monospace;letter-spacing:-0.203px"><span style="color:#6a9955">    // <span style="letter-spacing:2.80px">初始化日志</span></span></div>
<div class="tx" style="left:490.2px;top:642.1px;font:26px/26px 'Liberation Mono', monospace;letter-spacing:-0.203px;color:#6e7681">12</div>
<div class="tx" style="left:572px;top:642.1px;font:26px/26px 'Liberation Mono', monospace;letter-spacing:-0.203px"><span style="color:#dcdcaa">    init_logger</span><span style="color:#da70d6">()</span><span style="color:#cccccc">;</span></div>
<div class="tx" style="left:490.2px;top:680.1px;font:26px/26px 'Liberation Mono', monospace;letter-spacing:-0.203px;color:#6e7681">13</div>
<div class="tx" style="left:572px;top:680.1px;font:26px/26px 'Liberation Mono', monospace;letter-spacing:-0.203px"><span style="color:#dcdcaa">    info!</span><span style="color:#da70d6">(</span><span style="color:#ce9178">&quot;Starting LLM Plugin Framework&quot;</span><span style="color:#da70d6">)</span><span style="color:#cccccc">;</span></div>
<div class="tx" style="left:490.2px;top:718.1px;font:26px/26px 'Liberation Mono', monospace;letter-spacing:-0.203px;color:#6e7681">14</div>
<div class="tx" style="left:490.2px;top:756.1px;font:26px/26px 'Liberation Mono', monospace;letter-spacing:-0.203px;color:#6e7681">15</div>
<div class="tx" style="left:572px;top:756.1px;font:26px/26px 'Liberation Mono', monospace;letter-spacing:-0.203px"><span style="color:#6a9955">    // <span style="letter-spacing:2.80px">加载配置</span></span></div>
<div class="tx" style="left:490.2px;top:794.1px;font:26px/26px 'Liberation Mono', monospace;letter-spacing:-0.203px;color:#6e7681">16</div>
<div class="tx" style="left:572px;top:794.1px;font:26px/26px 'Liberation Mono', monospace;letter-spacing:-0.203px"><span style="color:#569cd6">    let</span><span style="color:#cccccc"> </span><span style="color:#9cdcfe">config</span><span style="color:#cccccc"> = </span><span style="color:#4ec9b0">Config</span><span style="color:#cccccc">::</span><span style="color:#dcdcaa">default</span><span style="color:#da70d6">()</span><span style="color:#cccccc">;</span></div>
<div class="tx" style="left:490.2px;top:832.1px;font:26px/26px 'Liberation Mono', monospace;letter-spacing:-0.203px;color:#6e7681">17</div>
<div class="tx" style="left:490.2px;top:870.1px;font:26px/26px 'Liberation Mono', monospace;letter-spacing:-0.203px;color:#6e7681">18</div>
<div class="tx" style="left:572px;top:870.1px;font:26px/26px 'Liberation Mono', monospace;letter-spacing:-0.203px"><span style="color:#6a9955">    // <span style="letter-spacing:2.80px">创建插件管理器</span></span></div>
<div class="tx" style="left:490.2px;top:908.1px;font:26px/26px 'Liberation Mono', monospace;letter-spacing:-0.203px;color:#6e7681">19</div>
<div class="tx" style="left:572px;top:908.1px;font:26px/26px 'Liberation Mono', monospace;letter-spacing:-0.203px"><span style="color:#569cd6">    let</span><span style="color:#cccccc"> </span><span style="color:#569cd6">mut</span><span style="color:#cccccc"> </span><span style="color:#9cdcfe">manager</span><span style="color:#cccccc"> = </span><span style="color:#4ec9b0">PluginManager</span><span style="color:#cccccc">::</span><span style="color:#dcdcaa">new</span><span style="color:#da70d6">()</span><span style="color:#cccccc">;</span></div>
<div class="tx" style="left:490.2px;top:946.1px;font:26px/26px 'Liberation Mono', monospace;letter-spacing:-0.203px;color:#6e7681">20</div>
<div class="tx" style="left:490.2px;top:984.1px;font:26px/26px 'Liberation Mono', monospace;letter-spacing:-0.203px;color:#6e7681">21</div>
<div class="tx" style="left:572px;top:984.1px;font:26px/26px 'Liberation Mono', monospace;letter-spacing:-0.203px"><span style="color:#6a9955">    // <span style="letter-spacing:2.80px">注册</span> LLM <span style="letter-spacing:2.80px">插件</span></span></div>
<div class="tx" style="left:490.2px;top:1022.1px;font:26px/26px 'Liberation Mono', monospace;letter-spacing:-0.203px;color:#6e7681">22</div>
<div class="tx" style="left:572px;top:1022.1px;font:26px/26px 'Liberation Mono', monospace;letter-spacing:-0.203px"><span style="color:#dcdcaa">    register_llm_plugins</span><span style="color:#da70d6">(</span><span style="color:#cccccc">&amp;</span><span style="color:#569cd6">mut</span><span style="color:#cccccc"> </span><span style="color:#9cdcfe">manager</span><span style="color:#da70d6">)</span><span style="color:#cccccc">;</span></div>
<div class="tx" style="left:490.2px;top:1060.1px;font:26px/26px 'Liberation Mono', monospace;letter-spacing:-0.203px;color:#6e7681">23</div>
<div class="tx" style="left:490.2px;top:1098.1px;font:26px/26px 'Liberation Mono', monospace;letter-spacing:-0.203px;color:#6e7681">24</div>
<div class="tx" style="left:572px;top:1098.1px;font:26px/26px 'Liberation Mono', monospace;letter-spacing:-0.203px"><span style="color:#6a9955">    // <span style="letter-spacing:2.80px">注册功能插件</span></span></div>
<div class="tx" style="left:490.2px;top:1136.1px;font:26px/26px 'Liberation Mono', monospace;letter-spacing:-0.203px;color:#6e7681">25</div>
<div class="tx" style="left:572px;top:1136.1px;font:26px/26px 'Liberation Mono', monospace;letter-spacing:-0.203px"><span style="color:#dcdcaa">    register_feature_plugins</span><span style="color:#da70d6">(</span><span style="color:#cccccc">&amp;</span><span style="color:#569cd6">mut</span><span style="color:#cccccc"> </span><span style="color:#9cdcfe">manager</span><span style="color:#da70d6">)</span><span style="color:#cccccc">;</span></div>
<div class="tx" style="left:490.2px;top:1174.1px;font:26px/26px 'Liberation Mono', monospace;letter-spacing:-0.203px;color:#6e7681">26</div>
<div class="tx" style="left:490.2px;top:1212.1px;font:26px/26px 'Liberation Mono', monospace;letter-spacing:-0.203px;color:#6e7681">27</div>
<div class="tx" style="left:572px;top:1212.1px;font:26px/26px 'Liberation Mono', monospace;letter-spacing:-0.203px"><span style="color:#6a9955">    // <span style="letter-spacing:2.80px">运行示例</span></span></div>
<div class="tx" style="left:490.2px;top:1250.1px;font:26px/26px 'Liberation Mono', monospace;letter-spacing:-0.203px;color:#6e7681">28</div>
<div class="tx" style="left:572px;top:1250.1px;font:26px/26px 'Liberation Mono', monospace;letter-spacing:-0.203px"><span style="color:#dcdcaa">    run_examples</span><span style="color:#da70d6">(</span><span style="color:#cccccc">&amp;</span><span style="color:#9cdcfe">manager</span><span style="color:#da70d6">)</span><span style="color:#cccccc">.</span><span style="color:#c586c0">await</span><span style="color:#cccccc">?;</span></div>
<div class="tx" style="left:490.2px;top:1288.1px;font:26px/26px 'Liberation Mono', monospace;letter-spacing:-0.203px;color:#6e7681">29</div>
<div class="tx" style="left:490.2px;top:1326.1px;font:26px/26px 'Liberation Mono', monospace;letter-spacing:-0.203px;color:#6e7681">30</div>
<div class="tx" style="left:572px;top:1326.1px;font:26px/26px 'Liberation Mono', monospace;letter-spacing:-0.203px"><span style="color:#4ec9b0">    Ok</span><span style="color:#da70d6">(</span><span style="color:#179fff">()</span><span style="color:#da70d6">)</span></div>
<div class="tx" style="left:490.2px;top:1364.1px;font:26px/26px 'Liberation Mono', monospace;letter-spacing:-0.203px;color:#6e7681">31</div>
<div class="tx" style="left:572px;top:1364.1px;font:26px/26px 'Liberation Mono', monospace;letter-spacing:-0.203px"><span style="color:#ffd700">}</span></div>
<div class="tx" style="left:490.2px;top:1402.1px;font:26px/26px 'Liberation Mono', monospace;letter-spacing:-0.203px;color:#6e7681">32</div>
<div class="tx" style="left:490.2px;top:1440.1px;font:26px/26px 'Liberation Mono', monospace;letter-spacing:-0.203px;color:#6e7681">33</div>
<div class="tx" style="left:572px;top:1440.1px;font:26px/26px 'Liberation Mono', monospace;letter-spacing:-0.203px"><span style="color:#6a9955">/// <span style="letter-spacing:2.80px">注册</span> LLM <span style="letter-spacing:2.80px">插件</span></span></div>
<div class="tx" style="left:490.2px;top:1510.1px;font:26px/26px 'Liberation Mono', monospace;letter-spacing:-0.203px;color:#6e7681">34</div>
<div class="tx" style="left:572px;top:1510.1px;font:26px/26px 'Liberation Mono', monospace;letter-spacing:-0.203px"><span style="color:#569cd6">fn</span><span style="color:#cccccc"> </span><span style="color:#dcdcaa">register_llm_plugins</span><span style="color:#ffd700">(</span><span style="color:#9cdcfe">manager</span><span style="color:#cccccc">: &amp;</span><span style="color:#569cd6">mut</span><span style="color:#cccccc"> </span><span style="color:#4ec9b0">PluginManager</span><span style="color:#ffd700">)</span><span style="color:#cccccc"> </span><span style="color:#ffd700">{</span></div>
<div class="tx" style="left:490.2px;top:1548.1px;font:26px/26px 'Liberation Mono', monospace;letter-spacing:-0.203px;color:#6e7681">35</div>
<div class="tx" style="left:572px;top:1548.1px;font:26px/26px 'Liberation Mono', monospace;letter-spacing:-0.203px"><span style="color:#6a9955">    // <span style="letter-spacing:2.80px">注册蓝耘插件</span></span></div>
<div class="tx" style="left:490.2px;top:1586.1px;font:26px/26px 'Liberation Mono', monospace;letter-spacing:-0.203px;color:#6e7681">36</div>
<div class="tx" style="left:572px;top:1586.1px;font:26px/26px 'Liberation Mono', monospace;letter-spacing:-0.203px"><span style="color:#569cd6">    let</span><span style="color:#cccccc"> </span><span style="color:#9cdcfe">lanyun_plugin</span><span style="color:#cccccc"> = </span><span style="color:#4ec9b0">Box</span><span style="color:#cccccc">::</span><span style="color:#dcdcaa">new</span><span style="color:#da70d6">(</span><span style="color:#4ec9b0">llm_plugin_lanyun</span><span style="color:#cccccc">::</span><span style="color:#4ec9b0">LanyunPlugin</span><span style="color:#cccccc">::</span><span style="color:#dcdcaa">default</span><span style="color:#179fff">()</span><span style="color:#da70d6">)</span><span style="color:#cccccc">;</span></div>
<div class="tx" style="left:490.2px;top:1624.1px;font:26px/26px 'Liberation Mono', monospace;letter-spacing:-0.203px;color:#6e7681">37</div>
<div class="tx" style="left:572px;top:1624.1px;font:26px/26px 'Liberation Mono', monospace;letter-spacing:-0.203px"><span style="color:#9cdcfe">    manager</span><span style="color:#cccccc">.</span><span style="color:#dcdcaa">register_llm_plugin</span><span style="color:#da70d6">(</span><span style="color:#ce9178">&quot;lanyun&quot;</span><span style="color:#cccccc">.</span><span style="color:#dcdcaa">to_string</span><span style="color:#179fff">()</span><span style="color:#cccccc">, </span><span style="color:#9cdcfe">lanyun_plugin</span><span style="color:#da70d6">)</span><span style="color:#cccccc">;</span></div>
<div class="tx" style="left:490.2px;top:1662.1px;font:26px/26px 'Liberation Mono', monospace;letter-spacing:-0.203px;color:#6e7681">38</div>
<div class="tx" style="left:490.2px;top:1700.1px;font:26px/26px 'Liberation Mono', monospace;letter-spacing:-0.203px;color:#6e7681">39</div>
<div class="tx" style="left:572px;top:1700.1px;font:26px/26px 'Liberation Mono', monospace;letter-spacing:-0.203px"><span style="color:#dcdcaa">    info!</span><span style="color:#da70d6">(</span><span style="color:#ce9178">&quot;Registered {} LLM plugins&quot;</span><span style="color:#cccccc">, </span><span style="color:#9cdcfe">manager</span><span style="color:#cccccc">.</span><span style="color:#dcdcaa">list_llm_plugins</span><span style="color:#179fff">()</span><span style="color:#cccccc">.</span><span style="color:#dcdcaa">len</span><span style="color:#179fff">()</span><span style="color:#da70d6">)</span><span style="color:#cccccc">;</span></div>
<div class="tx" style="left:490.2px;top:1738.1px;font:26px/26px 'Liberation Mono', monospace;letter-spacing:-0.203px;color:#6e7681">40</div>
<div class="tx" style="left:572px;top:1738.1px;font:26px/26px 'Liberation Mono', monospace;letter-spacing:-0.203px"><span style="color:#ffd700">}</span></div>
<div class="tx" style="left:490.2px;top:1776.1px;font:26px/26px 'Liberation Mono', monospace;letter-spacing:-0.203px;color:#6e7681">41</div>
<div style="position:absolute;left:572px;top:450px;width:4px;height:38px;background:#aeafad;"></div>
<div class="tx" style="left:661px;top:458.1px;font:26px/26px 'Liberation Mono', monospace;letter-spacing:-0.203px;color:#8b8b8b">Alt+K <span style="letter-spacing:2.80px">生成代码，</span>Alt+I <span style="letter-spacing:2.80px">打开对话</span></div>
<svg style="position:absolute;left:572.0px;top:532.0px" width="24.0" height="20.0" viewBox="0 0 48 40" ><rect x="1" y="1" width="46.8" height="38" rx="17" ry="19" fill="#9a9a9a"/>
<path fill="#1f1f1f" d="M20.5 -1h2.6L13 41h-2.6zM32 -1h2.6L24.5 41h-2.6z"/>
<path fill="#1f1f1f" d="M21.2 10L17.5 10A7.5 9.5 0 0 0 10.7 19.5 7.5 9.5 0 0 0 15.5 29L16.4 29z"/>
<path fill="#1f1f1f" d="M33.5 11.2a3.8 3.8 0 0 1 2.3 4.8l-2 0.3-1.8-0.3z"/>
<circle cx="37.4" cy="27" r="11.8" fill="#1f1f1f"/>
<circle cx="37.4" cy="27" r="8.8" fill="none" stroke="#9a9a9a" stroke-width="1.9"/>
<path fill="none" stroke="#9a9a9a" stroke-width="1.9" d="M34.6 21.5v11M40.8 21.5l-5.6 5.4 5.8 5.6"/></svg>
<div style="position:absolute;left:603.8px;top:531px;width:2px;height:24px;background:#999999;"></div>
<div style="position:absolute;left:719.2px;top:531px;width:2px;height:24px;background:#999999;"></div>
<div style="position:absolute;left:834px;top:531px;width:2px;height:24px;background:#999999;"></div>
<div style="position:absolute;left:949px;top:531px;width:2px;height:24px;background:#999999;"></div>
<div style="position:absolute;left:1064.5px;top:531px;width:2px;height:24px;background:#999999;"></div>
<div style="position:absolute;left:1178.7px;top:531px;width:2px;height:24px;background:#999999;"></div>
<div id="t32" class="tx" style="left:613.6px;top:530.68px;font-size:24px;line-height:24px;color:#999999;font-weight:normal;font-style:normal;font-family:'Liberation Sans', sans-serif;">解释代码</div>
<div id="t33" class="tx" style="left:728.4px;top:530.68px;font-size:24px;line-height:24px;color:#999999;font-weight:normal;font-style:normal;font-family:'Liberation Sans', sans-serif;">生成文档</div>
<div id="t34" class="tx" style="left:844px;top:530.68px;font-size:24px;line-height:24px;color:#999999;font-weight:normal;font-style:normal;font-family:'Liberation Sans', sans-serif;">修复代码</div>
<div id="t35" class="tx" style="left:959px;top:530.68px;font-size:24px;line-height:24px;color:#999999;font-weight:normal;font-style:normal;font-family:'Liberation Sans', sans-serif;">生成测试</div>
<div id="t36" class="tx" style="left:1073.7px;top:530.68px;font-size:24px;line-height:24px;color:#999999;font-weight:normal;font-style:normal;font-family:'Liberation Sans', sans-serif;">代码评审</div>
<div id="t37" class="tx" style="left:1188.5px;top:530.68px;font-size:24px;line-height:24px;color:#999999;font-weight:normal;font-style:normal;font-family:'Liberation Sans', sans-serif;">关闭</div>
<svg style="position:absolute;left:572.0px;top:1476.0px" width="24.0" height="20.0" viewBox="0 0 48 40" ><rect x="1" y="1" width="46.8" height="38" rx="17" ry="19" fill="#9a9a9a"/>
<path fill="#1f1f1f" d="M20.5 -1h2.6L13 41h-2.6zM32 -1h2.6L24.5 41h-2.6z"/>
<path fill="#1f1f1f" d="M21.2 10L17.5 10A7.5 9.5 0 0 0 10.7 19.5 7.5 9.5 0 0 0 15.5 29L16.4 29z"/>
<path fill="#1f1f1f" d="M33.5 11.2a3.8 3.8 0 0 1 2.3 4.8l-2 0.3-1.8-0.3z"/>
<circle cx="37.4" cy="27" r="11.8" fill="#1f1f1f"/>
<circle cx="37.4" cy="27" r="8.8" fill="none" stroke="#9a9a9a" stroke-width="1.9"/>
<path fill="none" stroke="#9a9a9a" stroke-width="1.9" d="M34.6 21.5v11M40.8 21.5l-5.6 5.4 5.8 5.6"/></svg>
<div style="position:absolute;left:603.8px;top:1475px;width:2px;height:24px;background:#999999;"></div>
<div style="position:absolute;left:719.2px;top:1475px;width:2px;height:24px;background:#999999;"></div>
<div style="position:absolute;left:834px;top:1475px;width:2px;height:24px;background:#999999;"></div>
<div style="position:absolute;left:949px;top:1475px;width:2px;height:24px;background:#999999;"></div>
<div style="position:absolute;left:1064.5px;top:1475px;width:2px;height:24px;background:#999999;"></div>
<div style="position:absolute;left:1178.7px;top:1475px;width:2px;height:24px;background:#999999;"></div>
<div id="t38" class="tx" style="left:613.6px;top:1474.68px;font-size:24px;line-height:24px;color:#999999;font-weight:normal;font-style:normal;font-family:'Liberation Sans', sans-serif;">解释代码</div>
<div id="t39" class="tx" style="left:728.4px;top:1474.68px;font-size:24px;line-height:24px;color:#999999;font-weight:normal;font-style:normal;font-family:'Liberation Sans', sans-serif;">生成文档</div>
<div id="t40" class="tx" style="left:844px;top:1474.68px;font-size:24px;line-height:24px;color:#999999;font-weight:normal;font-style:normal;font-family:'Liberation Sans', sans-serif;">修复代码</div>
<div id="t41" class="tx" style="left:959px;top:1474.68px;font-size:24px;line-height:24px;color:#999999;font-weight:normal;font-style:normal;font-family:'Liberation Sans', sans-serif;">生成测试</div>
<div id="t42" class="tx" style="left:1073.7px;top:1474.68px;font-size:24px;line-height:24px;color:#999999;font-weight:normal;font-style:normal;font-family:'Liberation Sans', sans-serif;">代码评审</div>
<div id="t43" class="tx" style="left:1188.5px;top:1474.68px;font-size:24px;line-height:24px;color:#999999;font-weight:normal;font-style:normal;font-family:'Liberation Sans', sans-serif;">关闭</div>
<svg style="position:absolute;left:0;top:0" width="3072" height="1824" viewBox="0 0 3072 1824"><g opacity="0.42"><rect x="2811" y="185" width="6" height="3" fill="#569cd6"/><rect x="2819" y="185" width="30" height="3" fill="#cccccc"/><rect x="2811" y="193" width="6" height="3" fill="#569cd6"/><rect x="2819" y="193" width="12" height="3" fill="#4ec9b0"/><rect x="2831" y="193" width="4" height="3" fill="#cccccc"/><rect x="2835" y="193" width="12" height="3" fill="#4ec9b0"/><rect x="2847" y="193" width="2" height="3" fill="#cccccc"/><rect x="2811" y="197" width="6" height="3" fill="#569cd6"/><rect x="2819" y="197" width="36" height="3" fill="#4ec9b0"/><rect x="2855" y="197" width="4" height="3" fill="#cccccc"/><rect x="2859" y="197" width="2" height="3" fill="#ffd700"/><rect x="2861" y="197" width="24" height="3" fill="#cccccc"/><rect x="2887" y="197" width="12" height="3" fill="#4ec9b0"/><rect x="2899" y="197" width="2" height="3" fill="#ffd700"/><rect x="2901" y="197" width="2" height="3" fill="#cccccc"/><rect x="2811" y="201" width="6" height="3" fill="#569cd6"/><rect x="2819" y="201" width="28" height="3" fill="#4ec9b0"/><rect x="2847" y="201" width="4" height="3" fill="#cccccc"/><rect x="2851" y="201" width="14" height="3" fill="#4ec9b0"/><rect x="2865" y="201" width="2" height="3" fill="#cccccc"/><rect x="2811" y="205" width="6" height="3" fill="#569cd6"/><rect x="2819" y="205" width="28" height="3" fill="#4ec9b0"/><rect x="2847" y="205" width="4" height="3" fill="#cccccc"/><rect x="2851" y="205" width="26" height="3" fill="#4ec9b0"/><rect x="2877" y="205" width="2" height="3" fill="#cccccc"/><rect x="2811" y="209" width="6" height="3" fill="#569cd6"/><rect x="2819" y="209" width="14" height="3" fill="#4ec9b0"/><rect x="2833" y="209" width="14" height="3" fill="#cccccc"/><rect x="2811" y="217" width="2" height="3" fill="#cccccc"/><rect x="2813" y="217" width="2" height="3" fill="#ffd700"/><rect x="2815" y="217" width="22" height="3" fill="#cccccc"/><rect x="2837" y="217" width="2" height="3" fill="#ffd700"/><rect x="2811" y="221" width="10" height="3" fill="#569cd6"/><rect x="2823" y="221" width="4" height="3" fill="#569cd6"/><rect x="2829" y="221" width="8" height="3" fill="#dcdcaa"/><rect x="2837" y="221" width="4" height="3" fill="#ffd700"/><rect x="2843" y="221" width="4" height="3" fill="#cccccc"/><rect x="2849" y="221" width="12" height="3" fill="#4ec9b0"/><rect x="2861" y="221" width="2" height="3" fill="#cccccc"/><rect x="2863" y="221" width="4" height="3" fill="#ffd700"/><rect x="2867" y="221" width="2" height="3" fill="#cccccc"/><rect x="2871" y="221" width="2" height="3" fill="#ffd700"/><rect x="2819" y="225" width="4" height="3" fill="#6a9955"/><rect x="2825" y="225" width="20" height="3" fill="#6a9955"/><rect x="2819" y="229" width="22" height="3" fill="#dcdcaa"/><rect x="2841" y="229" width="4" height="3" fill="#da70d6"/><rect x="2845" y="229" width="2" height="3" fill="#cccccc"/><rect x="2819" y="233" width="10" height="3" fill="#dcdcaa"/><rect x="2829" y="233" width="2" height="3" fill="#da70d6"/><rect x="2831" y="233" width="18" height="3" fill="#ce9178"/><rect x="2851" y="233" width="6" height="3" fill="#ce9178"/><rect x="2859" y="233" width="12" height="3" fill="#ce9178"/><rect x="2873" y="233" width="20" height="3" fill="#ce9178"/><rect x="2893" y="233" width="2" height="3" fill="#da70d6"/><rect x="2895" y="233" width="2" height="3" fill="#cccccc"/><rect x="2819" y="241" width="4" height="3" fill="#6a9955"/><rect x="2825" y="241" width="16" height="3" fill="#6a9955"/><rect x="2819" y="245" width="6" height="3" fill="#569cd6"/><rect x="2827" y="245" width="12" height="3" fill="#9cdcfe"/><rect x="2841" y="245" width="2" height="3" fill="#cccccc"/><rect x="2845" y="245" width="12" height="3" fill="#4ec9b0"/><rect x="2857" y="245" width="4" height="3" fill="#cccccc"/><rect x="2861" y="245" width="14" height="3" fill="#dcdcaa"/><rect x="2875" y="245" width="4" height="3" fill="#da70d6"/><rect x="2879" y="245" width="2" height="3" fill="#cccccc"/><rect x="2819" y="253" width="4" height="3" fill="#6a9955"/><rect x="2825" y="253" width="28" height="3" fill="#6a9955"/><rect x="2819" y="257" width="6" height="3" fill="#569cd6"/><rect x="2827" y="257" width="6" height="3" fill="#569cd6"/><rect x="2835" y="257" width="14" height="3" fill="#9cdcfe"/><rect x="2851" y="257" width="2" height="3" fill="#cccccc"/><rect x="2855" y="257" width="26" height="3" fill="#4ec9b0"/><rect x="2881" y="257" width="4" height="3" fill="#cccccc"/><rect x="2885" y="257" width="6" height="3" fill="#dcdcaa"/><rect x="2891" y="257" width="4" height="3" fill="#da70d6"/><rect x="2895" y="257" width="2" height="3" fill="#cccccc"/><rect x="2819" y="265" width="4" height="3" fill="#6a9955"/><rect x="2825" y="265" width="8" height="3" fill="#6a9955"/><rect x="2835" y="265" width="6" height="3" fill="#6a9955"/><rect x="2843" y="265" width="8" height="3" fill="#6a9955"/><rect x="2819" y="269" width="40" height="3" fill="#dcdcaa"/><rect x="2859" y="269" width="2" height="3" fill="#da70d6"/><rect x="2861" y="269" width="2" height="3" fill="#cccccc"/><rect x="2863" y="269" width="6" height="3" fill="#569cd6"/><rect x="2871" y="269" width="14" height="3" fill="#9cdcfe"/><rect x="2885" y="269" width="2" height="3" fill="#da70d6"/><rect x="2887" y="269" width="2" height="3" fill="#cccccc"/><rect x="2819" y="277" width="4" height="3" fill="#6a9955"/><rect x="2825" y="277" width="24" height="3" fill="#6a9955"/><rect x="2819" y="281" width="48" height="3" fill="#dcdcaa"/><rect x="2867" y="281" width="2" height="3" fill="#da70d6"/><rect x="2869" y="281" width="2" height="3" fill="#cccccc"/><rect x="2871" y="281" width="6" height="3" fill="#569cd6"/><rect x="2879" y="281" width="14" height="3" fill="#9cdcfe"/><rect x="2893" y="281" width="2" height="3" fill="#da70d6"/><rect x="2895" y="281" width="2" height="3" fill="#cccccc"/><rect x="2819" y="289" width="4" height="3" fill="#6a9955"/><rect x="2825" y="289" width="16" height="3" fill="#6a9955"/><rect x="2819" y="293" width="24" height="3" fill="#dcdcaa"/><rect x="2843" y="293" width="2" height="3" fill="#da70d6"/><rect x="2845" y="293" width="2" height="3" fill="#cccccc"/><rect x="2847" y="293" width="14" height="3" fill="#9cdcfe"/><rect x="2861" y="293" width="2" height="3" fill="#da70d6"/><rect x="2863" y="293" width="2" height="3" fill="#cccccc"/><rect x="2865" y="293" width="10" height="3" fill="#c586c0"/><rect x="2875" y="293" width="4" height="3" fill="#cccccc"/><rect x="2819" y="301" width="4" height="3" fill="#4ec9b0"/><rect x="2823" y="301" width="2" height="3" fill="#da70d6"/><rect x="2825" y="301" width="4" height="3" fill="#179fff"/><rect x="2829" y="301" width="2" height="3" fill="#da70d6"/><rect x="2811" y="305" width="2" height="3" fill="#ffd700"/><rect x="2811" y="313" width="6" height="3" fill="#6a9955"/><rect x="2819" y="313" width="8" height="3" fill="#6a9955"/><rect x="2829" y="313" width="6" height="3" fill="#6a9955"/><rect x="2837" y="313" width="8" height="3" fill="#6a9955"/><rect x="2811" y="317" width="4" height="3" fill="#569cd6"/><rect x="2817" y="317" width="40" height="3" fill="#dcdcaa"/><rect x="2857" y="317" width="2" height="3" fill="#ffd700"/><rect x="2859" y="317" width="14" height="3" fill="#9cdcfe"/><rect x="2873" y="317" width="2" height="3" fill="#cccccc"/><rect x="2877" y="317" width="2" height="3" fill="#cccccc"/><rect x="2879" y="317" width="6" height="3" fill="#569cd6"/><rect x="2887" y="317" width="26" height="3" fill="#4ec9b0"/><rect x="2913" y="317" width="2" height="3" fill="#ffd700"/><rect x="2917" y="317" width="2" height="3" fill="#ffd700"/><rect x="2819" y="321" width="4" height="3" fill="#6a9955"/><rect x="2825" y="321" width="24" height="3" fill="#6a9955"/><rect x="2819" y="325" width="6" height="3" fill="#569cd6"/><rect x="2827" y="325" width="26" height="3" fill="#9cdcfe"/><rect x="2855" y="325" width="2" height="3" fill="#cccccc"/><rect x="2859" y="325" width="6" height="3" fill="#4ec9b0"/><rect x="2865" y="325" width="4" height="3" fill="#cccccc"/><rect x="2869" y="325" width="6" height="3" fill="#dcdcaa"/><rect x="2875" y="325" width="2" height="3" fill="#da70d6"/><rect x="2877" y="325" width="34" height="3" fill="#4ec9b0"/><rect x="2911" y="325" width="4" height="3" fill="#cccccc"/><rect x="2915" y="325" width="24" height="3" fill="#4ec9b0"/><rect x="2939" y="325" width="4" height="3" fill="#cccccc"/><rect x="2943" y="325" width="14" height="3" fill="#dcdcaa"/><rect x="2957" y="325" width="4" height="3" fill="#179fff"/><rect x="2961" y="325" width="2" height="3" fill="#da70d6"/><rect x="2963" y="325" width="2" height="3" fill="#cccccc"/><rect x="2819" y="329" width="14" height="3" fill="#9cdcfe"/><rect x="2833" y="329" width="2" height="3" fill="#cccccc"/><rect x="2835" y="329" width="38" height="3" fill="#dcdcaa"/><rect x="2873" y="329" width="2" height="3" fill="#da70d6"/><rect x="2875" y="329" width="16" height="3" fill="#ce9178"/><rect x="2891" y="329" width="2" height="3" fill="#cccccc"/><rect x="2893" y="329" width="18" height="3" fill="#dcdcaa"/><rect x="2911" y="329" width="4" height="3" fill="#179fff"/><rect x="2915" y="329" width="2" height="3" fill="#cccccc"/><rect x="2919" y="329" width="26" height="3" fill="#9cdcfe"/><rect x="2945" y="329" width="2" height="3" fill="#da70d6"/><rect x="2947" y="329" width="2" height="3" fill="#cccccc"/><rect x="2819" y="337" width="10" height="3" fill="#dcdcaa"/><rect x="2829" y="337" width="2" height="3" fill="#da70d6"/><rect x="2831" y="337" width="22" height="3" fill="#ce9178"/><rect x="2855" y="337" width="4" height="3" fill="#ce9178"/><rect x="2861" y="337" width="6" height="3" fill="#ce9178"/><rect x="2869" y="337" width="16" height="3" fill="#ce9178"/><rect x="2885" y="337" width="2" height="3" fill="#cccccc"/><rect x="2889" y="337" width="14" height="3" fill="#9cdcfe"/><rect x="2903" y="337" width="2" height="3" fill="#cccccc"/><rect x="2905" y="337" width="32" height="3" fill="#dcdcaa"/><rect x="2937" y="337" width="4" height="3" fill="#179fff"/><rect x="2941" y="337" width="2" height="3" fill="#cccccc"/><rect x="2943" y="337" width="6" height="3" fill="#dcdcaa"/><rect x="2949" y="337" width="4" height="3" fill="#179fff"/><rect x="2953" y="337" width="2" height="3" fill="#da70d6"/><rect x="2955" y="337" width="2" height="3" fill="#cccccc"/><rect x="2811" y="341" width="2" height="3" fill="#ffd700"/><rect x="2811" y="349" width="6" height="3" fill="#6a9955"/><rect x="2819" y="349" width="24" height="3" fill="#6a9955"/><rect x="2811" y="353" width="4" height="3" fill="#569cd6"/><rect x="2817" y="353" width="48" height="3" fill="#dcdcaa"/><rect x="2865" y="353" width="2" height="3" fill="#cccccc"/><rect x="2867" y="353" width="14" height="3" fill="#4ec9b0"/><rect x="2881" y="353" width="2" height="3" fill="#cccccc"/><rect x="2885" y="353" width="2" height="3" fill="#cccccc"/><rect x="2887" y="353" width="6" height="3" fill="#569cd6"/><rect x="2895" y="353" width="26" height="3" fill="#4ec9b0"/><rect x="2921" y="353" width="2" height="3" fill="#cccccc"/><rect x="2925" y="353" width="2" height="3" fill="#cccccc"/><rect x="2819" y="357" width="4" height="3" fill="#6a9955"/><rect x="2825" y="357" width="32" height="3" fill="#6a9955"/><rect x="2819" y="361" width="6" height="3" fill="#569cd6"/><rect x="2827" y="361" width="24" height="3" fill="#9cdcfe"/><rect x="2853" y="361" width="2" height="3" fill="#cccccc"/><rect x="2857" y="361" width="6" height="3" fill="#4ec9b0"/><rect x="2863" y="361" width="2" height="3" fill="#cccccc"/><rect x="2865" y="361" width="2" height="3" fill="#cccccc"/><rect x="2867" y="361" width="6" height="3" fill="#dcdcaa"/><rect x="2873" y="361" width="2" height="3" fill="#cccccc"/><rect x="2875" y="361" width="40" height="3" fill="#4ec9b0"/><rect x="2915" y="361" width="2" height="3" fill="#cccccc"/><rect x="2917" y="361" width="2" height="3" fill="#cccccc"/><rect x="2919" y="361" width="34" height="3" fill="#4ec9b0"/><rect x="2953" y="361" width="2" height="3" fill="#cccccc"/><rect x="2955" y="361" width="2" height="3" fill="#cccccc"/><rect x="2957" y="361" width="14" height="3" fill="#dcdcaa"/><rect x="2971" y="361" width="2" height="3" fill="#cccccc"/><rect x="2973" y="361" width="2" height="3" fill="#cccccc"/><rect x="2975" y="361" width="2" height="3" fill="#cccccc"/><rect x="2977" y="361" width="2" height="3" fill="#cccccc"/><rect x="2819" y="365" width="14" height="3" fill="#9cdcfe"/><rect x="2833" y="365" width="2" height="3" fill="#cccccc"/><rect x="2835" y="365" width="46" height="3" fill="#dcdcaa"/><rect x="2881" y="365" width="2" height="3" fill="#cccccc"/><rect x="2883" y="365" width="28" height="3" fill="#ce9178"/><rect x="2911" y="365" width="2" height="3" fill="#cccccc"/><rect x="2913" y="365" width="18" height="3" fill="#dcdcaa"/><rect x="2931" y="365" width="2" height="3" fill="#cccccc"/><rect x="2933" y="365" width="2" height="3" fill="#cccccc"/><rect x="2935" y="365" width="2" height="3" fill="#cccccc"/><rect x="2939" y="365" width="24" height="3" fill="#9cdcfe"/><rect x="2963" y="365" width="2" height="3" fill="#cccccc"/><rect x="2965" y="365" width="2" height="3" fill="#cccccc"/><rect x="2819" y="373" width="4" height="3" fill="#6a9955"/><rect x="2825" y="373" width="32" height="3" fill="#6a9955"/><rect x="2819" y="377" width="6" height="3" fill="#569cd6"/><rect x="2827" y="377" width="20" height="3" fill="#9cdcfe"/><rect x="2849" y="377" width="2" height="3" fill="#cccccc"/><rect x="2853" y="377" width="6" height="3" fill="#4ec9b0"/><rect x="2859" y="377" width="2" height="3" fill="#cccccc"/><rect x="2861" y="377" width="2" height="3" fill="#cccccc"/><rect x="2863" y="377" width="6" height="3" fill="#dcdcaa"/><rect x="2869" y="377" width="2" height="3" fill="#cccccc"/><rect x="2871" y="377" width="36" height="3" fill="#4ec9b0"/><rect x="2907" y="377" width="2" height="3" fill="#cccccc"/><rect x="2909" y="377" width="2" height="3" fill="#cccccc"/><rect x="2911" y="377" width="30" height="3" fill="#4ec9b0"/><rect x="2941" y="377" width="2" height="3" fill="#cccccc"/><rect x="2943" y="377" width="2" height="3" fill="#cccccc"/><rect x="2945" y="377" width="14" height="3" fill="#dcdcaa"/><rect x="2959" y="377" width="2" height="3" fill="#cccccc"/><rect x="2961" y="377" width="2" height="3" fill="#cccccc"/><rect x="2963" y="377" width="2" height="3" fill="#cccccc"/><rect x="2965" y="377" width="2" height="3" fill="#cccccc"/><rect x="2819" y="381" width="14" height="3" fill="#9cdcfe"/><rect x="2833" y="381" width="2" height="3" fill="#cccccc"/><rect x="2835" y="381" width="46" height="3" fill="#dcdcaa"/><rect x="2881" y="381" width="2" height="3" fill="#cccccc"/><rect x="2883" y="381" width="24" height="3" fill="#ce9178"/><rect x="2907" y="381" width="2" height="3" fill="#cccccc"/><rect x="2909" y="381" width="18" height="3" fill="#dcdcaa"/><rect x="2927" y="381" width="2" height="3" fill="#cccccc"/><rect x="2929" y="381" width="2" height="3" fill="#cccccc"/><rect x="2931" y="381" width="2" height="3" fill="#cccccc"/><rect x="2935" y="381" width="20" height="3" fill="#9cdcfe"/><rect x="2955" y="381" width="2" height="3" fill="#cccccc"/><rect x="2957" y="381" width="2" height="3" fill="#cccccc"/><rect x="2819" y="389" width="4" height="3" fill="#6a9955"/><rect x="2825" y="389" width="36" height="3" fill="#6a9955"/><rect x="2819" y="393" width="6" height="3" fill="#569cd6"/><rect x="2827" y="393" width="20" height="3" fill="#9cdcfe"/><rect x="2849" y="393" width="2" height="3" fill="#cccccc"/><rect x="2853" y="393" width="6" height="3" fill="#4ec9b0"/><rect x="2859" y="393" width="2" height="3" fill="#cccccc"/><rect x="2861" y="393" width="2" height="3" fill="#cccccc"/><rect x="2863" y="393" width="6" height="3" fill="#dcdcaa"/><rect x="2869" y="393" width="2" height="3" fill="#cccccc"/><rect x="2871" y="393" width="36" height="3" fill="#4ec9b0"/><rect x="2907" y="393" width="2" height="3" fill="#cccccc"/><rect x="2909" y="393" width="2" height="3" fill="#cccccc"/><rect x="2911" y="393" width="30" height="3" fill="#4ec9b0"/><rect x="2941" y="393" width="2" height="3" fill="#cccccc"/><rect x="2943" y="393" width="2" height="3" fill="#cccccc"/><rect x="2945" y="393" width="14" height="3" fill="#dcdcaa"/><rect x="2959" y="393" width="2" height="3" fill="#cccccc"/><rect x="2961" y="393" width="2" height="3" fill="#cccccc"/><rect x="2963" y="393" width="2" height="3" fill="#cccccc"/><rect x="2965" y="393" width="2" height="3" fill="#cccccc"/><rect x="2819" y="397" width="14" height="3" fill="#9cdcfe"/><rect x="2833" y="397" width="2" height="3" fill="#cccccc"/><rect x="2835" y="397" width="46" height="3" fill="#dcdcaa"/><rect x="2881" y="397" width="2" height="3" fill="#cccccc"/><rect x="2883" y="397" width="24" height="3" fill="#ce9178"/><rect x="2907" y="397" width="2" height="3" fill="#cccccc"/><rect x="2909" y="397" width="18" height="3" fill="#dcdcaa"/><rect x="2927" y="397" width="2" height="3" fill="#cccccc"/><rect x="2929" y="397" width="2" height="3" fill="#cccccc"/><rect x="2931" y="397" width="2" height="3" fill="#cccccc"/><rect x="2935" y="397" width="20" height="3" fill="#9cdcfe"/><rect x="2955" y="397" width="2" height="3" fill="#cccccc"/><rect x="2957" y="397" width="2" height="3" fill="#cccccc"/><rect x="2819" y="405" width="10" height="3" fill="#dcdcaa"/><rect x="2829" y="405" width="2" height="3" fill="#cccccc"/><rect x="2831" y="405" width="22" height="3" fill="#ce9178"/><rect x="2855" y="405" width="4" height="3" fill="#ce9178"/><rect x="2861" y="405" width="14" height="3" fill="#ce9178"/><rect x="2877" y="405" width="16" height="3" fill="#ce9178"/><rect x="2893" y="405" width="2" height="3" fill="#cccccc"/><rect x="2897" y="405" width="14" height="3" fill="#9cdcfe"/><rect x="2911" y="405" width="2" height="3" fill="#cccccc"/><rect x="2913" y="405" width="40" height="3" fill="#dcdcaa"/><rect x="2953" y="405" width="2" height="3" fill="#cccccc"/><rect x="2955" y="405" width="2" height="3" fill="#cccccc"/><rect x="2957" y="405" width="2" height="3" fill="#cccccc"/><rect x="2959" y="405" width="6" height="3" fill="#dcdcaa"/><rect x="2965" y="405" width="2" height="3" fill="#cccccc"/><rect x="2967" y="405" width="2" height="3" fill="#cccccc"/><rect x="2969" y="405" width="2" height="3" fill="#cccccc"/><rect x="2971" y="405" width="2" height="3" fill="#cccccc"/><rect x="2811" y="409" width="2" height="3" fill="#cccccc"/><rect x="2811" y="417" width="6" height="3" fill="#6a9955"/><rect x="2819" y="417" width="16" height="3" fill="#6a9955"/><rect x="2811" y="421" width="10" height="3" fill="#569cd6"/><rect x="2823" y="421" width="4" height="3" fill="#569cd6"/><rect x="2829" y="421" width="24" height="3" fill="#dcdcaa"/><rect x="2853" y="421" width="2" height="3" fill="#cccccc"/><rect x="2855" y="421" width="14" height="3" fill="#4ec9b0"/><rect x="2869" y="421" width="2" height="3" fill="#cccccc"/><rect x="2873" y="421" width="2" height="3" fill="#cccccc"/><rect x="2875" y="421" width="26" height="3" fill="#4ec9b0"/><rect x="2901" y="421" width="2" height="3" fill="#cccccc"/><rect x="2905" y="421" width="2" height="3" fill="#cccccc"/><rect x="2907" y="421" width="2" height="3" fill="#cccccc"/><rect x="2911" y="421" width="12" height="3" fill="#4ec9b0"/><rect x="2923" y="421" width="2" height="3" fill="#cccccc"/><rect x="2925" y="421" width="2" height="3" fill="#cccccc"/><rect x="2927" y="421" width="2" height="3" fill="#cccccc"/><rect x="2929" y="421" width="2" height="3" fill="#cccccc"/><rect x="2933" y="421" width="2" height="3" fill="#cccccc"/><rect x="2819" y="425" width="10" height="3" fill="#dcdcaa"/><rect x="2829" y="425" width="2" height="3" fill="#cccccc"/><rect x="2831" y="425" width="8" height="3" fill="#ce9178"/><rect x="2841" y="425" width="14" height="3" fill="#ce9178"/><rect x="2857" y="425" width="16" height="3" fill="#ce9178"/><rect x="2875" y="425" width="12" height="3" fill="#ce9178"/><rect x="2887" y="425" width="2" height="3" fill="#cccccc"/><rect x="2889" y="425" width="2" height="3" fill="#cccccc"/><rect x="2819" y="433" width="4" height="3" fill="#6a9955"/><rect x="2825" y="433" width="8" height="3" fill="#6a9955"/><rect x="2835" y="433" width="4" height="3" fill="#6a9955"/><rect x="2841" y="433" width="16" height="3" fill="#6a9955"/><rect x="2819" y="437" width="48" height="3" fill="#dcdcaa"/><rect x="2867" y="437" width="2" height="3" fill="#cccccc"/><rect x="2869" y="437" width="14" height="3" fill="#9cdcfe"/><rect x="2883" y="437" width="2" height="3" fill="#cccccc"/><rect x="2885" y="437" width="2" height="3" fill="#cccccc"/><rect x="2887" y="437" width="10" height="3" fill="#c586c0"/><rect x="2897" y="437" width="2" height="3" fill="#cccccc"/><rect x="2899" y="437" width="2" height="3" fill="#cccccc"/><rect x="2819" y="445" width="4" height="3" fill="#6a9955"/><rect x="2825" y="445" width="8" height="3" fill="#6a9955"/><rect x="2835" y="445" width="4" height="3" fill="#6a9955"/><rect x="2841" y="445" width="16" height="3" fill="#6a9955"/><rect x="2819" y="449" width="44" height="3" fill="#dcdcaa"/><rect x="2863" y="449" width="2" height="3" fill="#cccccc"/><rect x="2865" y="449" width="14" height="3" fill="#9cdcfe"/><rect x="2879" y="449" width="2" height="3" fill="#cccccc"/><rect x="2881" y="449" width="2" height="3" fill="#cccccc"/><rect x="2883" y="449" width="10" height="3" fill="#c586c0"/><rect x="2893" y="449" width="2" height="3" fill="#cccccc"/><rect x="2895" y="449" width="2" height="3" fill="#cccccc"/><rect x="2819" y="457" width="4" height="3" fill="#6a9955"/><rect x="2825" y="457" width="8" height="3" fill="#6a9955"/><rect x="2835" y="457" width="4" height="3" fill="#6a9955"/><rect x="2841" y="457" width="20" height="3" fill="#6a9955"/><rect x="2819" y="461" width="44" height="3" fill="#dcdcaa"/><rect x="2863" y="461" width="2" height="3" fill="#cccccc"/><rect x="2865" y="461" width="14" height="3" fill="#9cdcfe"/><rect x="2879" y="461" width="2" height="3" fill="#cccccc"/><rect x="2881" y="461" width="2" height="3" fill="#cccccc"/><rect x="2883" y="461" width="10" height="3" fill="#c586c0"/><rect x="2893" y="461" width="2" height="3" fill="#cccccc"/><rect x="2895" y="461" width="2" height="3" fill="#cccccc"/><rect x="2819" y="469" width="4" height="3" fill="#dcdcaa"/><rect x="2823" y="469" width="2" height="3" fill="#cccccc"/><rect x="2825" y="469" width="2" height="3" fill="#cccccc"/><rect x="2827" y="469" width="2" height="3" fill="#cccccc"/><rect x="2829" y="469" width="2" height="3" fill="#cccccc"/><rect x="2811" y="473" width="2" height="3" fill="#cccccc"/><rect x="2811" y="481" width="6" height="3" fill="#6a9955"/><rect x="2819" y="481" width="8" height="3" fill="#6a9955"/><rect x="2829" y="481" width="4" height="3" fill="#6a9955"/><rect x="2835" y="481" width="16" height="3" fill="#6a9955"/><rect x="2811" y="485" width="10" height="3" fill="#569cd6"/><rect x="2823" y="485" width="4" height="3" fill="#569cd6"/><rect x="2829" y="485" width="48" height="3" fill="#dcdcaa"/><rect x="2877" y="485" width="2" height="3" fill="#cccccc"/><rect x="2879" y="485" width="14" height="3" fill="#4ec9b0"/><rect x="2893" y="485" width="2" height="3" fill="#cccccc"/><rect x="2897" y="485" width="2" height="3" fill="#cccccc"/><rect x="2899" y="485" width="26" height="3" fill="#4ec9b0"/><rect x="2925" y="485" width="2" height="3" fill="#cccccc"/><rect x="2929" y="485" width="2" height="3" fill="#cccccc"/><rect x="2931" y="485" width="2" height="3" fill="#cccccc"/><rect x="2935" y="485" width="12" height="3" fill="#4ec9b0"/><rect x="2947" y="485" width="2" height="3" fill="#cccccc"/><rect x="2949" y="485" width="2" height="3" fill="#cccccc"/><rect x="2951" y="485" width="2" height="3" fill="#cccccc"/><rect x="2953" y="485" width="2" height="3" fill="#cccccc"/><rect x="2957" y="485" width="2" height="3" fill="#cccccc"/><rect x="2819" y="489" width="10" height="3" fill="#dcdcaa"/><rect x="2829" y="489" width="2" height="3" fill="#cccccc"/><rect x="2831" y="489" width="16" height="3" fill="#ce9178"/><rect x="2849" y="489" width="4" height="3" fill="#ce9178"/><rect x="2855" y="489" width="6" height="3" fill="#ce9178"/><rect x="2863" y="489" width="18" height="3" fill="#ce9178"/><rect x="2881" y="489" width="2" height="3" fill="#cccccc"/><rect x="2883" y="489" width="2" height="3" fill="#cccccc"/><rect x="2819" y="497" width="6" height="3" fill="#569cd6"/><rect x="2827" y="497" width="12" height="3" fill="#9cdcfe"/><rect x="2841" y="497" width="2" height="3" fill="#cccccc"/><rect x="2845" y="497" width="14" height="3" fill="#9cdcfe"/><rect x="2827" y="501" width="2" height="3" fill="#cccccc"/><rect x="2829" y="501" width="36" height="3" fill="#dcdcaa"/><rect x="2865" y="501" width="2" height="3" fill="#cccccc"/><rect x="2867" y="501" width="28" height="3" fill="#ce9178"/><rect x="2895" y="501" width="2" height="3" fill="#cccccc"/><rect x="2827" y="505" width="2" height="3" fill="#cccccc"/><rect x="2829" y="505" width="12" height="3" fill="#dcdcaa"/><rect x="2841" y="505" width="2" height="3" fill="#cccccc"/><rect x="2843" y="505" width="8" height="3" fill="#ce9178"/><rect x="2853" y="505" width="16" height="3" fill="#ce9178"/><rect x="2871" y="505" width="12" height="3" fill="#ce9178"/><rect x="2885" y="505" width="6" height="3" fill="#ce9178"/><rect x="2893" y="505" width="12" height="3" fill="#ce9178"/><rect x="2905" y="505" width="2" height="3" fill="#cccccc"/><rect x="2907" y="505" width="2" height="3" fill="#cccccc"/><rect x="2819" y="513" width="6" height="3" fill="#569cd6"/><rect x="2827" y="513" width="20" height="3" fill="#9cdcfe"/><rect x="2849" y="513" width="2" height="3" fill="#cccccc"/><rect x="2853" y="513" width="6" height="3" fill="#ce9178"/><rect x="2811" y="517" width="20" height="3" fill="#ce9178"/><rect x="2833" y="517" width="16" height="3" fill="#ce9178"/><rect x="2851" y="517" width="8" height="3" fill="#ce9178"/><rect x="2861" y="517" width="16" height="3" fill="#ce9178"/><rect x="2879" y="517" width="22" height="3" fill="#ce9178"/><rect x="2811" y="521" width="20" height="3" fill="#ce9178"/><rect x="2833" y="521" width="16" height="3" fill="#ce9178"/><rect x="2851" y="521" width="8" height="3" fill="#ce9178"/><rect x="2861" y="521" width="18" height="3" fill="#ce9178"/><rect x="2881" y="521" width="4" height="3" fill="#ce9178"/><rect x="2887" y="521" width="16" height="3" fill="#ce9178"/><rect x="2811" y="525" width="20" height="3" fill="#ce9178"/><rect x="2833" y="525" width="16" height="3" fill="#ce9178"/><rect x="2851" y="525" width="14" height="3" fill="#ce9178"/><rect x="2867" y="525" width="8" height="3" fill="#ce9178"/><rect x="2877" y="525" width="12" height="3" fill="#ce9178"/><rect x="2891" y="525" width="10" height="3" fill="#ce9178"/><rect x="2903" y="525" width="16" height="3" fill="#ce9178"/><rect x="2811" y="529" width="20" height="3" fill="#ce9178"/><rect x="2833" y="529" width="16" height="3" fill="#ce9178"/><rect x="2851" y="529" width="10" height="3" fill="#ce9178"/><rect x="2863" y="529" width="12" height="3" fill="#ce9178"/><rect x="2877" y="529" width="4" height="3" fill="#ce9178"/><rect x="2883" y="529" width="14" height="3" fill="#ce9178"/><rect x="2899" y="529" width="4" height="3" fill="#ce9178"/><rect x="2905" y="529" width="16" height="3" fill="#ce9178"/><rect x="2923" y="529" width="6" height="3" fill="#ce9178"/><rect x="2811" y="533" width="20" height="3" fill="#ce9178"/><rect x="2833" y="533" width="16" height="3" fill="#ce9178"/><rect x="2851" y="533" width="16" height="3" fill="#ce9178"/><rect x="2869" y="533" width="16" height="3" fill="#ce9178"/><rect x="2887" y="533" width="20" height="3" fill="#ce9178"/><rect x="2909" y="533" width="8" height="3" fill="#ce9178"/><rect x="2811" y="537" width="20" height="3" fill="#ce9178"/><rect x="2833" y="537" width="16" height="3" fill="#ce9178"/><rect x="2851" y="537" width="10" height="3" fill="#ce9178"/><rect x="2863" y="537" width="10" height="3" fill="#ce9178"/><rect x="2875" y="537" width="12" height="3" fill="#ce9178"/><rect x="2811" y="541" width="4" height="3" fill="#ce9178"/><rect x="2815" y="541" width="2" height="3" fill="#cccccc"/><rect x="2819" y="549" width="6" height="3" fill="#569cd6"/><rect x="2827" y="549" width="16" height="3" fill="#9cdcfe"/><rect x="2845" y="549" width="2" height="3" fill="#cccccc"/><rect x="2849" y="549" width="12" height="3" fill="#9cdcfe"/><rect x="2861" y="549" width="2" height="3" fill="#cccccc"/><rect x="2863" y="549" width="14" height="3" fill="#dcdcaa"/><rect x="2877" y="549" width="2" height="3" fill="#cccccc"/><rect x="2879" y="549" width="20" height="3" fill="#9cdcfe"/><rect x="2899" y="549" width="2" height="3" fill="#cccccc"/><rect x="2903" y="549" width="8" height="3" fill="#4ec9b0"/><rect x="2911" y="549" width="2" height="3" fill="#cccccc"/><rect x="2913" y="549" width="2" height="3" fill="#cccccc"/><rect x="2915" y="549" width="10" height="3" fill="#c586c0"/><rect x="2925" y="549" width="2" height="3" fill="#cccccc"/><rect x="2927" y="549" width="2" height="3" fill="#cccccc"/><rect x="2819" y="553" width="16" height="3" fill="#dcdcaa"/><rect x="2835" y="553" width="2" height="3" fill="#cccccc"/><rect x="2837" y="553" width="12" height="3" fill="#ce9178"/><rect x="2849" y="553" width="2" height="3" fill="#cccccc"/><rect x="2853" y="553" width="16" height="3" fill="#9cdcfe"/><rect x="2869" y="553" width="2" height="3" fill="#cccccc"/><rect x="2871" y="553" width="14" height="3" fill="#9cdcfe"/><rect x="2885" y="553" width="2" height="3" fill="#cccccc"/><rect x="2887" y="553" width="2" height="3" fill="#cccccc"/><rect x="2819" y="561" width="4" height="3" fill="#dcdcaa"/><rect x="2823" y="561" width="2" height="3" fill="#cccccc"/><rect x="2825" y="561" width="2" height="3" fill="#cccccc"/><rect x="2827" y="561" width="2" height="3" fill="#cccccc"/><rect x="2829" y="561" width="2" height="3" fill="#cccccc"/><rect x="2811" y="565" width="2" height="3" fill="#cccccc"/><rect x="2811" y="573" width="6" height="3" fill="#6a9955"/><rect x="2819" y="573" width="8" height="3" fill="#6a9955"/><rect x="2829" y="573" width="4" height="3" fill="#6a9955"/><rect x="2835" y="573" width="16" height="3" fill="#6a9955"/><rect x="2811" y="577" width="10" height="3" fill="#569cd6"/><rect x="2823" y="577" width="4" height="3" fill="#569cd6"/><rect x="2829" y="577" width="44" height="3" fill="#dcdcaa"/><rect x="2873" y="577" width="2" height="3" fill="#cccccc"/><rect x="2875" y="577" width="14" height="3" fill="#4ec9b0"/><rect x="2889" y="577" width="2" height="3" fill="#cccccc"/><rect x="2893" y="577" width="2" height="3" fill="#cccccc"/><rect x="2895" y="577" width="26" height="3" fill="#4ec9b0"/><rect x="2921" y="577" width="2" height="3" fill="#cccccc"/><rect x="2925" y="577" width="2" height="3" fill="#cccccc"/><rect x="2927" y="577" width="2" height="3" fill="#cccccc"/><rect x="2931" y="577" width="12" height="3" fill="#4ec9b0"/><rect x="2943" y="577" width="2" height="3" fill="#cccccc"/><rect x="2945" y="577" width="2" height="3" fill="#cccccc"/><rect x="2947" y="577" width="2" height="3" fill="#cccccc"/><rect x="2949" y="577" width="2" height="3" fill="#cccccc"/><rect x="2953" y="577" width="2" height="3" fill="#cccccc"/><rect x="2819" y="581" width="10" height="3" fill="#dcdcaa"/><rect x="2829" y="581" width="2" height="3" fill="#cccccc"/><rect x="2831" y="581" width="16" height="3" fill="#ce9178"/><rect x="2849" y="581" width="4" height="3" fill="#ce9178"/><rect x="2855" y="581" width="8" height="3" fill="#ce9178"/><rect x="2865" y="581" width="12" height="3" fill="#ce9178"/><rect x="2877" y="581" width="2" height="3" fill="#cccccc"/><rect x="2879" y="581" width="2" height="3" fill="#cccccc"/><rect x="2819" y="589" width="6" height="3" fill="#569cd6"/><rect x="2827" y="589" width="12" height="3" fill="#9cdcfe"/><rect x="2841" y="589" width="2" height="3" fill="#cccccc"/><rect x="2845" y="589" width="14" height="3" fill="#9cdcfe"/><rect x="2827" y="593" width="2" height="3" fill="#cccccc"/><rect x="2829" y="593" width="36" height="3" fill="#dcdcaa"/><rect x="2865" y="593" width="2" height="3" fill="#cccccc"/><rect x="2867" y="593" width="24" height="3" fill="#ce9178"/><rect x="2891" y="593" width="2" height="3" fill="#cccccc"/><rect x="2827" y="597" width="2" height="3" fill="#cccccc"/><rect x="2829" y="597" width="12" height="3" fill="#dcdcaa"/><rect x="2841" y="597" width="2" height="3" fill="#cccccc"/><rect x="2843" y="597" width="10" height="3" fill="#ce9178"/><rect x="2855" y="597" width="10" height="3" fill="#ce9178"/><rect x="2867" y="597" width="12" height="3" fill="#ce9178"/><rect x="2881" y="597" width="6" height="3" fill="#ce9178"/><rect x="2889" y="597" width="12" height="3" fill="#ce9178"/><rect x="2901" y="597" width="2" height="3" fill="#cccccc"/><rect x="2903" y="597" width="2" height="3" fill="#cccccc"/><rect x="2819" y="605" width="6" height="3" fill="#569cd6"/><rect x="2827" y="605" width="22" height="3" fill="#9cdcfe"/><rect x="2851" y="605" width="2" height="3" fill="#cccccc"/><rect x="2855" y="605" width="6" height="3" fill="#ce9178"/><rect x="2811" y="609" width="16" height="3" fill="#ce9178"/><rect x="2829" y="609" width="30" height="3" fill="#ce9178"/><rect x="2861" y="609" width="18" height="3" fill="#ce9178"/><rect x="2881" y="609" width="2" height="3" fill="#ce9178"/><rect x="2819" y="613" width="10" height="3" fill="#ce9178"/><rect x="2831" y="613" width="10" height="3" fill="#ce9178"/><rect x="2843" y="613" width="2" height="3" fill="#ce9178"/><rect x="2847" y="613" width="14" height="3" fill="#ce9178"/><rect x="2863" y="613" width="2" height="3" fill="#ce9178"/><rect x="2867" y="613" width="8" height="3" fill="#ce9178"/><rect x="2877" y="613" width="10" height="3" fill="#ce9178"/><rect x="2889" y="613" width="10" height="3" fill="#ce9178"/><rect x="2901" y="613" width="22" height="3" fill="#ce9178"/><rect x="2925" y="613" width="2" height="3" fill="#ce9178"/><rect x="2929" y="613" width="16" height="3" fill="#ce9178"/><rect x="2947" y="613" width="2" height="3" fill="#ce9178"/><rect x="2951" y="613" width="4" height="3" fill="#ce9178"/><rect x="2957" y="613" width="6" height="3" fill="#ce9178"/><rect x="2965" y="613" width="22" height="3" fill="#ce9178"/><rect x="2989" y="613" width="2" height="3" fill="#ce9178"/><rect x="2993" y="613" width="16" height="3" fill="#ce9178"/><rect x="3011" y="613" width="2" height="3" fill="#ce9178"/><rect x="3015" y="613" width="8" height="3" fill="#ce9178"/><rect x="2819" y="617" width="36" height="3" fill="#ce9178"/><rect x="2819" y="625" width="86" height="3" fill="#ce9178"/><rect x="2907" y="625" width="2" height="3" fill="#ce9178"/><rect x="2911" y="625" width="18" height="3" fill="#ce9178"/><rect x="2819" y="633" width="10" height="3" fill="#ce9178"/><rect x="2831" y="633" width="14" height="3" fill="#ce9178"/><rect x="2847" y="633" width="2" height="3" fill="#ce9178"/><rect x="2851" y="633" width="44" height="3" fill="#ce9178"/><rect x="2811" y="637" width="2" height="3" fill="#ce9178"/><rect x="2811" y="641" width="4" height="3" fill="#ce9178"/><rect x="2815" y="641" width="2" height="3" fill="#cccccc"/><rect x="2819" y="649" width="6" height="3" fill="#569cd6"/><rect x="2827" y="649" width="16" height="3" fill="#9cdcfe"/><rect x="2845" y="649" width="2" height="3" fill="#cccccc"/><rect x="2849" y="649" width="12" height="3" fill="#9cdcfe"/><rect x="2861" y="649" width="2" height="3" fill="#cccccc"/><rect x="2863" y="649" width="14" height="3" fill="#dcdcaa"/><rect x="2877" y="649" width="2" height="3" fill="#cccccc"/><rect x="2879" y="649" width="22" height="3" fill="#9cdcfe"/><rect x="2901" y="649" width="2" height="3" fill="#cccccc"/><rect x="2905" y="649" width="8" height="3" fill="#4ec9b0"/><rect x="2913" y="649" width="2" height="3" fill="#cccccc"/><rect x="2915" y="649" width="2" height="3" fill="#cccccc"/><rect x="2917" y="649" width="10" height="3" fill="#c586c0"/><rect x="2927" y="649" width="2" height="3" fill="#cccccc"/><rect x="2929" y="649" width="2" height="3" fill="#cccccc"/><rect x="2819" y="653" width="16" height="3" fill="#dcdcaa"/><rect x="2835" y="653" width="2" height="3" fill="#cccccc"/><rect x="2837" y="653" width="12" height="3" fill="#ce9178"/><rect x="2849" y="653" width="2" height="3" fill="#cccccc"/><rect x="2853" y="653" width="16" height="3" fill="#9cdcfe"/><rect x="2869" y="653" width="2" height="3" fill="#cccccc"/><rect x="2871" y="653" width="14" height="3" fill="#9cdcfe"/><rect x="2885" y="653" width="2" height="3" fill="#cccccc"/><rect x="2887" y="653" width="2" height="3" fill="#cccccc"/><rect x="2819" y="661" width="4" height="3" fill="#dcdcaa"/><rect x="2823" y="661" width="2" height="3" fill="#cccccc"/><rect x="2825" y="661" width="2" height="3" fill="#cccccc"/><rect x="2827" y="661" width="2" height="3" fill="#cccccc"/><rect x="2829" y="661" width="2" height="3" fill="#cccccc"/><rect x="2811" y="665" width="2" height="3" fill="#cccccc"/><rect x="2811" y="673" width="6" height="3" fill="#6a9955"/><rect x="2819" y="673" width="8" height="3" fill="#6a9955"/><rect x="2829" y="673" width="4" height="3" fill="#6a9955"/><rect x="2835" y="673" width="28" height="3" fill="#6a9955"/><rect x="2811" y="677" width="10" height="3" fill="#569cd6"/><rect x="2823" y="677" width="4" height="3" fill="#569cd6"/><rect x="2829" y="677" width="44" height="3" fill="#dcdcaa"/><rect x="2873" y="677" width="2" height="3" fill="#cccccc"/><rect x="2875" y="677" width="14" height="3" fill="#4ec9b0"/><rect x="2889" y="677" width="2" height="3" fill="#cccccc"/><rect x="2893" y="677" width="2" height="3" fill="#cccccc"/><rect x="2895" y="677" width="26" height="3" fill="#4ec9b0"/><rect x="2921" y="677" width="2" height="3" fill="#cccccc"/><rect x="2925" y="677" width="2" height="3" fill="#cccccc"/><rect x="2927" y="677" width="2" height="3" fill="#cccccc"/><rect x="2931" y="677" width="12" height="3" fill="#4ec9b0"/><rect x="2943" y="677" width="2" height="3" fill="#cccccc"/><rect x="2945" y="677" width="2" height="3" fill="#cccccc"/><rect x="2947" y="677" width="2" height="3" fill="#cccccc"/><rect x="2949" y="677" width="2" height="3" fill="#cccccc"/><rect x="2953" y="677" width="2" height="3" fill="#cccccc"/><rect x="2819" y="681" width="10" height="3" fill="#dcdcaa"/><rect x="2829" y="681" width="2" height="3" fill="#cccccc"/><rect x="2831" y="681" width="16" height="3" fill="#ce9178"/><rect x="2849" y="681" width="4" height="3" fill="#ce9178"/><rect x="2855" y="681" width="12" height="3" fill="#ce9178"/><rect x="2869" y="681" width="14" height="3" fill="#ce9178"/><rect x="2885" y="681" width="22" height="3" fill="#ce9178"/><rect x="2907" y="681" width="2" height="3" fill="#cccccc"/><rect x="2909" y="681" width="2" height="3" fill="#cccccc"/><rect x="2819" y="689" width="6" height="3" fill="#569cd6"/><rect x="2827" y="689" width="12" height="3" fill="#9cdcfe"/><rect x="2841" y="689" width="2" height="3" fill="#cccccc"/><rect x="2845" y="689" width="14" height="3" fill="#9cdcfe"/><rect x="2827" y="693" width="2" height="3" fill="#cccccc"/><rect x="2829" y="693" width="36" height="3" fill="#dcdcaa"/><rect x="2865" y="693" width="2" height="3" fill="#cccccc"/><rect x="2867" y="693" width="24" height="3" fill="#ce9178"/><rect x="2891" y="693" width="2" height="3" fill="#cccccc"/><rect x="2827" y="697" width="2" height="3" fill="#cccccc"/><rect x="2829" y="697" width="12" height="3" fill="#dcdcaa"/><rect x="2841" y="697" width="2" height="3" fill="#cccccc"/><rect x="2843" y="697" width="14" height="3" fill="#ce9178"/><rect x="2859" y="697" width="6" height="3" fill="#ce9178"/><rect x="2867" y="697" width="12" height="3" fill="#ce9178"/><rect x="2881" y="697" width="6" height="3" fill="#ce9178"/><rect x="2889" y="697" width="12" height="3" fill="#ce9178"/><rect x="2901" y="697" width="2" height="3" fill="#cccccc"/><rect x="2903" y="697" width="2" height="3" fill="#cccccc"/><rect x="2819" y="705" width="4" height="3" fill="#6a9955"/><rect x="2825" y="705" width="8" height="3" fill="#6a9955"/><rect x="2835" y="705" width="12" height="3" fill="#6a9955"/><rect x="2849" y="705" width="8" height="3" fill="#6a9955"/><rect x="2819" y="709" width="6" height="3" fill="#569cd6"/><rect x="2827" y="709" width="16" height="3" fill="#9cdcfe"/><rect x="2845" y="709" width="2" height="3" fill="#cccccc"/><rect x="2849" y="709" width="12" height="3" fill="#9cdcfe"/><rect x="2861" y="709" width="2" height="3" fill="#cccccc"/><rect x="2863" y="709" width="14" height="3" fill="#dcdcaa"/><rect x="2877" y="709" width="2" height="3" fill="#cccccc"/><rect x="2879" y="709" width="16" height="3" fill="#ce9178"/><rect x="2895" y="709" width="2" height="3" fill="#cccccc"/><rect x="2899" y="709" width="8" height="3" fill="#4ec9b0"/><rect x="2907" y="709" width="2" height="3" fill="#cccccc"/><rect x="2909" y="709" width="2" height="3" fill="#cccccc"/><rect x="2911" y="709" width="10" height="3" fill="#c586c0"/><rect x="2921" y="709" width="2" height="3" fill="#cccccc"/><rect x="2923" y="709" width="2" height="3" fill="#cccccc"/><rect x="2819" y="713" width="16" height="3" fill="#dcdcaa"/><rect x="2835" y="713" width="2" height="3" fill="#cccccc"/><rect x="2837" y="713" width="12" height="3" fill="#ce9178"/><rect x="2849" y="713" width="2" height="3" fill="#cccccc"/><rect x="2853" y="713" width="16" height="3" fill="#9cdcfe"/><rect x="2869" y="713" width="2" height="3" fill="#cccccc"/><rect x="2871" y="713" width="14" height="3" fill="#9cdcfe"/><rect x="2885" y="713" width="2" height="3" fill="#cccccc"/><rect x="2887" y="713" width="2" height="3" fill="#cccccc"/><rect x="2819" y="721" width="4" height="3" fill="#6a9955"/><rect x="2825" y="721" width="8" height="3" fill="#6a9955"/><rect x="2835" y="721" width="6" height="3" fill="#6a9955"/><rect x="2843" y="721" width="8" height="3" fill="#6a9955"/><rect x="2819" y="725" width="6" height="3" fill="#569cd6"/><rect x="2827" y="725" width="16" height="3" fill="#9cdcfe"/><rect x="2845" y="725" width="2" height="3" fill="#cccccc"/><rect x="2849" y="725" width="12" height="3" fill="#9cdcfe"/><rect x="2861" y="725" width="2" height="3" fill="#cccccc"/><rect x="2863" y="725" width="14" height="3" fill="#dcdcaa"/><rect x="2877" y="725" width="2" height="3" fill="#cccccc"/><rect x="2879" y="725" width="10" height="3" fill="#ce9178"/><rect x="2889" y="725" width="2" height="3" fill="#cccccc"/><rect x="2893" y="725" width="8" height="3" fill="#4ec9b0"/><rect x="2901" y="725" width="2" height="3" fill="#cccccc"/><rect x="2903" y="725" width="2" height="3" fill="#cccccc"/><rect x="2905" y="725" width="10" height="3" fill="#c586c0"/><rect x="2915" y="725" width="2" height="3" fill="#cccccc"/><rect x="2917" y="725" width="2" height="3" fill="#cccccc"/><rect x="2819" y="729" width="16" height="3" fill="#dcdcaa"/><rect x="2835" y="729" width="2" height="3" fill="#cccccc"/><rect x="2837" y="729" width="12" height="3" fill="#ce9178"/><rect x="2849" y="729" width="2" height="3" fill="#cccccc"/><rect x="2853" y="729" width="16" height="3" fill="#9cdcfe"/><rect x="2869" y="729" width="2" height="3" fill="#cccccc"/><rect x="2871" y="729" width="14" height="3" fill="#9cdcfe"/><rect x="2885" y="729" width="2" height="3" fill="#cccccc"/><rect x="2887" y="729" width="2" height="3" fill="#cccccc"/><rect x="2819" y="737" width="4" height="3" fill="#dcdcaa"/><rect x="2823" y="737" width="2" height="3" fill="#cccccc"/><rect x="2825" y="737" width="2" height="3" fill="#cccccc"/><rect x="2827" y="737" width="2" height="3" fill="#cccccc"/><rect x="2829" y="737" width="2" height="3" fill="#cccccc"/><rect x="2811" y="741" width="2" height="3" fill="#cccccc"/></g></svg>
<div style="position:absolute;left:3044px;top:184px;width:2px;height:1596px;background:#2a2a2a;"></div>
<div style="position:absolute;left:3044px;top:184px;width:28px;height:351px;background:#434343;"></div>
<div style="position:absolute;left:3044px;top:184px;width:2px;height:351px;background:#4a4a4a;"></div>
<div style="position:absolute;left:3045px;top:240px;width:27px;height:4px;background:#878787;"></div>
<div id="t44" class="tx" style="left:2668px;top:1753.99px;font-size:26px;line-height:26px;color:rgba(255,255,255,0.82);font-weight:normal;font-style:normal;font-family:'Liberation Sans', sans-serif;letter-spacing:-1.256px;">掘金技术社区 @ 是你的小恐龙啊</div>
<div style="position:absolute;left:0px;top:1780px;width:3072px;height:2px;background:#2b2b2b;"></div>
<div style="position:absolute;left:0px;top:1782px;width:3072px;height:42px;background:#181818;"></div>
<svg style="position:absolute;left:20px;top:1788px" width="24" height="28" viewBox="0 0 24 28" ><g fill="none" stroke="#cccccc" stroke-width="2" stroke-linecap="round"><path d="M2 10l8 8-8 8M22 3l-8 8 8 8"/></g></svg>
<svg style="position:absolute;left:82px;top:1789px" width="28" height="28" viewBox="0 0 28 28" ><circle cx="14" cy="14" r="12.5" fill="none" stroke="#cccccc" stroke-width="2"/><path d="M9 9l10 10M19 9L9 19" stroke="#cccccc" stroke-width="2"/></svg>
<div id="t45" class="tx" style="left:117px;top:1792.68px;font-size:24px;line-height:24px;color:#cccccc;font-weight:normal;font-style:normal;font-family:'Liberation Sans', sans-serif;">0</div>
<svg style="position:absolute;left:140px;top:1788px" width="28" height="28" viewBox="0 0 28 28" ><path d="M14 2L26.5 25h-25z" fill="none" stroke="#cccccc" stroke-width="2" stroke-linejoin="round"/><path d="M14 10v8" stroke="#cccccc" stroke-width="2"/><circle cx="14" cy="21.5" r="1.3" fill="#cccccc"/></svg>
<div id="t46" class="tx" style="left:176px;top:1792.68px;font-size:24px;line-height:24px;color:#cccccc;font-weight:normal;font-style:normal;font-family:'Liberation Sans', sans-serif;">0</div>
<div id="t47" class="tx" style="left:2208px;top:1792.68px;font-size:24px;line-height:24px;color:#cccccc;font-weight:normal;font-style:normal;font-family:'Liberation Sans', sans-serif;letter-spacing:-0.005px;">行 8，列 1</div>
<div id="t48" class="tx" style="left:2351px;top:1792.68px;font-size:24px;line-height:24px;color:#cccccc;font-weight:normal;font-style:normal;font-family:'Liberation Sans', sans-serif;letter-spacing:0.078px;">空格: 4</div>
<div id="t49" class="tx" style="left:2457px;top:1792.68px;font-size:24px;line-height:24px;color:#cccccc;font-weight:normal;font-style:normal;font-family:'Liberation Sans', sans-serif;letter-spacing:-1.250px;">UTF-8</div>
<div id="t50" class="tx" style="left:2552px;top:1792.68px;font-size:24px;line-height:24px;color:#cccccc;font-weight:normal;font-style:normal;font-family:'Liberation Sans', sans-serif;letter-spacing:-5.016px;">LF</div>
<div id="t51" class="tx" style="left:2605px;top:1789.30px;font-size:28px;line-height:28px;color:#cccccc;font-weight:normal;font-style:normal;font-family:'Liberation Sans', sans-serif;letter-spacing:3.258px;">{ }</div>
<div id="t52" class="tx" style="left:2651px;top:1792.68px;font-size:24px;line-height:24px;color:#cccccc;font-weight:normal;font-style:normal;font-family:'Liberation Sans', sans-serif;letter-spacing:-0.453px;">Rust</div>
<svg style="position:absolute;left:2728px;top:1789px" width="34" height="28" viewBox="0 0 34 28" ><path fill="#cccccc" d="M17 3c-3-2.5-9-2.5-11 1-1.5 2.5-1 5.5-.5 7C3.5 12 2 14 2 16.5v3c0 1.5 1 2.5 2.5 3.5C8 25.5 12.5 27 17 27s9-1.5 12.5-4c1.5-1 2.5-2 2.5-3.5v-3c0-2.5-1.5-4.5-3.5-5.5.5-1.5 1-4.5-.5-7-2-3.5-8-3.5-11-1z"/>
<path fill="#181818" d="M9 6.5c1.5-1 5-1 6 .5.8 1.2.5 3.5-.3 4.5-1 1.2-4 1.2-5.5.5C8 11 8 7.5 9 6.5zM25 6.5c-1.5-1-5-1-6 .5-.8 1.2-.5 3.5.3 4.5 1 1.2 4 1.2 5.5.5 1.2-1 1.2-4.5.2-5.5zM8 16c3-1.5 15-1.5 18 0v5c-3 2-15 2-18 0z"/>
<path fill="#cccccc" d="M13 17.5h2v3h-2zM19 17.5h2v3h-2z"/></svg>
<svg style="position:absolute;left:2793.92px;top:1789.6px" width="32.160000000000004" height="26.8" viewBox="0 0 48 40" ><rect x="1" y="1" width="46.8" height="38" rx="17" ry="19" fill="#cccccc"/>
<path fill="#181818" d="M20.5 -1h2.6L13 41h-2.6zM32 -1h2.6L24.5 41h-2.6z"/>
<path fill="#181818" d="M21.2 10L17.5 10A7.5 9.5 0 0 0 10.7 19.5 7.5 9.5 0 0 0 15.5 29L16.4 29z"/>
<path fill="#181818" d="M33.5 11.2a3.8 3.8 0 0 1 2.3 4.8l-2 0.3-1.8-0.3z"/>
<circle cx="37.4" cy="27" r="11.8" fill="#181818"/>
<circle cx="37.4" cy="27" r="8.8" fill="none" stroke="#cccccc" stroke-width="1.9"/>
<path fill="none" stroke="#cccccc" stroke-width="1.9" d="M34.6 21.5v11M40.8 21.5l-5.6 5.4 5.8 5.6"/></svg>
<svg style="position:absolute;left:0px;top:0px" width="1" height="1" viewBox="0 0 1 1" ><g transform="translate(2873,1803) scale(0.66) translate(-48,-48)"><path fill="#cccccc" stroke="#cccccc" stroke-width="3" stroke-linejoin="round" d="M48 26.8 66.5 37.6v20.8L48 69.2 29.5 58.4V37.6z"/>
<path fill="#181818" d="M40.5 34C46 36.5 54 41 57.5 44.5 58.5 46 57.5 47.5 56 48.5 53 50.5 50.5 52 51.5 54.5L55.5 62C50 59.5 44 56 39.5 52.5 37.5 51 37.8 49 39.5 48 43 46 45.5 44.5 45 42z"/></g></svg>
<div id="t53" class="tx" style="left:2895px;top:1792.68px;font-size:24px;line-height:24px;color:#cccccc;font-weight:normal;font-style:normal;font-family:'Liberation Sans', sans-serif;">没有建议</div>
<svg style="position:absolute;left:3027px;top:1789px" width="26" height="28" viewBox="0 0 26 28" ><g fill="none" stroke="#cccccc" stroke-width="2" stroke-linejoin="round"><path d="M13 2a8 8 0 0 1 8 8v7l3 4H2l3-4v-7a8 8 0 0 1 8-8z"/><path d="M9.5 24a3.5 3.5 0 0 0 7 0"/></g></svg>
</body></html>
